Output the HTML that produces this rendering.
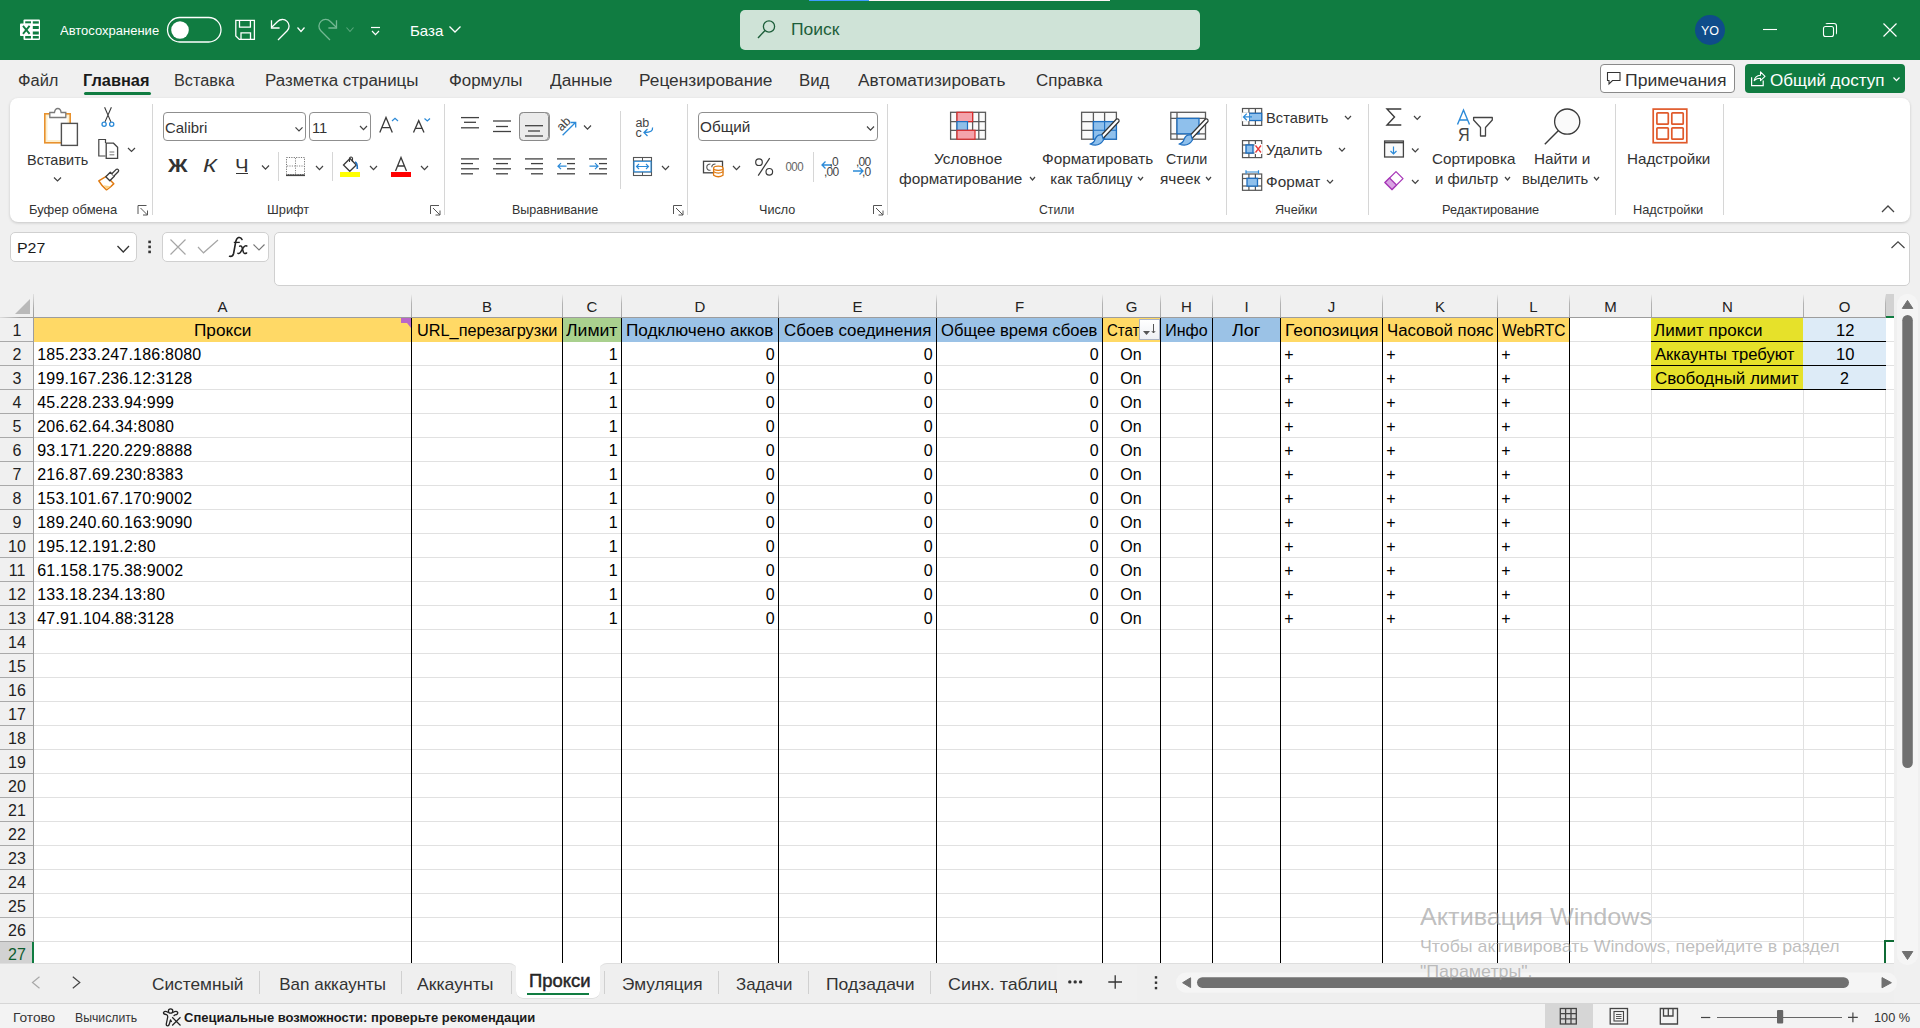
<!DOCTYPE html><html><head><meta charset="utf-8"><style>html,body{margin:0;padding:0;width:1920px;height:1028px;overflow:hidden;position:relative;background:#f0f0f0;font-family:"Liberation Sans",sans-serif}</style></head><body><div style="position:absolute;left:0px;top:0px;width:1920px;height:60px;background:#107c41"></div><div style="position:absolute;left:809px;top:0px;width:60px;height:1px;background:#3d9cff"></div><div style="position:absolute;left:869px;top:0px;width:241px;height:1px;background:#fdf4f4"></div><div style="position:absolute;left:740px;top:10px;width:460px;height:40px;background:#cfe3d7;border-radius:5px"></div><div style="position:absolute;left:791.21px;top:21.00px;white-space:pre;line-height:17px;font-family:&quot;Liberation Sans&quot;,sans-serif;font-size:16px;font-weight:400;color:#1d5e3a;transform:scaleX(1.0924);transform-origin:0 0;">Поиск</div><div style="position:absolute;left:60.41px;top:24.00px;white-space:pre;line-height:14px;font-family:&quot;Liberation Sans&quot;,sans-serif;font-size:12.5px;font-weight:400;color:#ffffff;transform:scaleX(1.0402);transform-origin:0 0;">Автосохранение</div><div style="position:absolute;left:410.32px;top:22.00px;white-space:pre;line-height:17px;font-family:&quot;Liberation Sans&quot;,sans-serif;font-size:15px;font-weight:400;color:#ffffff;transform:scaleX(1.0030);transform-origin:0 0;">База</div><div style="position:absolute;left:1695px;top:15px;width:30px;height:30px;background:#0f4c8a;border-radius:50%"></div><div style="position:absolute;left:1700.96px;top:24.00px;white-space:pre;line-height:14px;font-family:&quot;Liberation Sans&quot;,sans-serif;font-size:12px;font-weight:400;color:#ffffff;transform:scaleX(1.0425);transform-origin:0 0;">YO</div><div style="position:absolute;left:0px;top:60px;width:1920px;height:968px;background:#f0f0f0"></div><div style="position:absolute;left:18.26px;top:72.00px;white-space:pre;line-height:17px;font-family:&quot;Liberation Sans&quot;,sans-serif;font-size:16px;font-weight:400;color:#333333;transform:scaleX(1.0279);transform-origin:0 0;">Файл</div><div style="position:absolute;left:83.26px;top:72.00px;white-space:pre;line-height:17px;font-family:&quot;Liberation Sans&quot;,sans-serif;font-size:16px;font-weight:700;color:#1a1a1a;transform:scaleX(1.0209);transform-origin:0 0;">Главная</div><div style="position:absolute;left:174.27px;top:72.00px;white-space:pre;line-height:17px;font-family:&quot;Liberation Sans&quot;,sans-serif;font-size:16px;font-weight:400;color:#333333;transform:scaleX(1.0163);transform-origin:0 0;">Вставка</div><div style="position:absolute;left:265.24px;top:72.00px;white-space:pre;line-height:17px;font-family:&quot;Liberation Sans&quot;,sans-serif;font-size:16px;font-weight:400;color:#333333;transform:scaleX(1.0571);transform-origin:0 0;">Разметка страницы</div><div style="position:absolute;left:449.24px;top:72.00px;white-space:pre;line-height:17px;font-family:&quot;Liberation Sans&quot;,sans-serif;font-size:16px;font-weight:400;color:#333333;transform:scaleX(1.0548);transform-origin:0 0;">Формулы</div><div style="position:absolute;left:550.22px;top:72.00px;white-space:pre;line-height:17px;font-family:&quot;Liberation Sans&quot;,sans-serif;font-size:16px;font-weight:400;color:#333333;transform:scaleX(1.0800);transform-origin:0 0;">Данные</div><div style="position:absolute;left:639.22px;top:72.00px;white-space:pre;line-height:17px;font-family:&quot;Liberation Sans&quot;,sans-serif;font-size:16px;font-weight:400;color:#333333;transform:scaleX(1.0801);transform-origin:0 0;">Рецензирование</div><div style="position:absolute;left:799.24px;top:72.00px;white-space:pre;line-height:17px;font-family:&quot;Liberation Sans&quot;,sans-serif;font-size:16px;font-weight:400;color:#333333;transform:scaleX(1.0514);transform-origin:0 0;">Вид</div><div style="position:absolute;left:858.23px;top:72.00px;white-space:pre;line-height:17px;font-family:&quot;Liberation Sans&quot;,sans-serif;font-size:16px;font-weight:400;color:#333333;transform:scaleX(1.0740);transform-origin:0 0;">Автоматизировать</div><div style="position:absolute;left:1036.24px;top:72.00px;white-space:pre;line-height:17px;font-family:&quot;Liberation Sans&quot;,sans-serif;font-size:16px;font-weight:400;color:#333333;transform:scaleX(1.0585);transform-origin:0 0;">Справка</div><div style="position:absolute;left:84px;top:92px;width:67px;height:3px;background:#107c41;border-radius:2px"></div><div style="position:absolute;left:1600px;top:64px;width:133px;height:27px;background:#fff;border:1px solid #8a8a8a;border-radius:4px"></div><div style="position:absolute;left:1625.21px;top:72.00px;white-space:pre;line-height:17px;font-family:&quot;Liberation Sans&quot;,sans-serif;font-size:16px;font-weight:400;color:#333333;transform:scaleX(1.0981);transform-origin:0 0;">Примечания</div><div style="position:absolute;left:1745px;top:64px;width:160px;height:29px;background:#107c41;border-radius:4px"></div><div style="position:absolute;left:1770.23px;top:72.00px;white-space:pre;line-height:17px;font-family:&quot;Liberation Sans&quot;,sans-serif;font-size:16px;font-weight:400;color:#ffffff;transform:scaleX(1.0646);transform-origin:0 0;">Общий доступ</div><div style="position:absolute;left:10px;top:98px;width:1900px;height:124px;background:#fff;border-radius:8px;box-shadow:0 1px 3px rgba(0,0,0,0.18)"></div><div style="position:absolute;left:152px;top:104px;width:1px;height:111px;background:#d6d6d6"></div><div style="position:absolute;left:444px;top:104px;width:1px;height:111px;background:#d6d6d6"></div><div style="position:absolute;left:687px;top:104px;width:1px;height:111px;background:#d6d6d6"></div><div style="position:absolute;left:887px;top:104px;width:1px;height:111px;background:#d6d6d6"></div><div style="position:absolute;left:1226px;top:104px;width:1px;height:111px;background:#d6d6d6"></div><div style="position:absolute;left:1368px;top:104px;width:1px;height:111px;background:#d6d6d6"></div><div style="position:absolute;left:1615px;top:104px;width:1px;height:111px;background:#d6d6d6"></div><div style="position:absolute;left:1723px;top:104px;width:1px;height:111px;background:#d6d6d6"></div><div style="position:absolute;left:29.42px;top:202.00px;white-space:pre;line-height:15px;font-family:&quot;Liberation Sans&quot;,sans-serif;font-size:13.5px;font-weight:400;color:#333333;transform:scaleX(0.9616);transform-origin:0 0;">Буфер обмена</div><div style="position:absolute;left:267.42px;top:202.00px;white-space:pre;line-height:15px;font-family:&quot;Liberation Sans&quot;,sans-serif;font-size:13.5px;font-weight:400;color:#333333;transform:scaleX(0.9503);transform-origin:0 0;">Шрифт</div><div style="position:absolute;left:512.44px;top:202.00px;white-space:pre;line-height:15px;font-family:&quot;Liberation Sans&quot;,sans-serif;font-size:13.5px;font-weight:400;color:#333333;transform:scaleX(0.9277);transform-origin:0 0;">Выравнивание</div><div style="position:absolute;left:759.43px;top:202.00px;white-space:pre;line-height:15px;font-family:&quot;Liberation Sans&quot;,sans-serif;font-size:13.5px;font-weight:400;color:#333333;transform:scaleX(0.9327);transform-origin:0 0;">Число</div><div style="position:absolute;left:1039.45px;top:202.00px;white-space:pre;line-height:15px;font-family:&quot;Liberation Sans&quot;,sans-serif;font-size:13.5px;font-weight:400;color:#333333;transform:scaleX(0.9051);transform-origin:0 0;">Стили</div><div style="position:absolute;left:1275.43px;top:202.00px;white-space:pre;line-height:15px;font-family:&quot;Liberation Sans&quot;,sans-serif;font-size:13.5px;font-weight:400;color:#333333;transform:scaleX(0.9323);transform-origin:0 0;">Ячейки</div><div style="position:absolute;left:1442.43px;top:202.00px;white-space:pre;line-height:15px;font-family:&quot;Liberation Sans&quot;,sans-serif;font-size:13.5px;font-weight:400;color:#333333;transform:scaleX(0.9453);transform-origin:0 0;">Редактирование</div><div style="position:absolute;left:1633.42px;top:202.00px;white-space:pre;line-height:15px;font-family:&quot;Liberation Sans&quot;,sans-serif;font-size:13.5px;font-weight:400;color:#333333;transform:scaleX(0.9479);transform-origin:0 0;">Надстройки</div><div style="position:absolute;left:27.35px;top:151.00px;white-space:pre;line-height:17px;font-family:&quot;Liberation Sans&quot;,sans-serif;font-size:15px;font-weight:400;color:#333333;transform:scaleX(0.9647);transform-origin:0 0;">Вставить</div><div style="position:absolute;left:934.30px;top:150.00px;white-space:pre;line-height:17px;font-family:&quot;Liberation Sans&quot;,sans-serif;font-size:15px;font-weight:400;color:#333333;transform:scaleX(1.0319);transform-origin:0 0;">Условное</div><div style="position:absolute;left:899.31px;top:170.00px;white-space:pre;line-height:17px;font-family:&quot;Liberation Sans&quot;,sans-serif;font-size:15px;font-weight:400;color:#333333;transform:scaleX(1.0242);transform-origin:0 0;">форматирование</div><div style="position:absolute;left:1042.31px;top:150.00px;white-space:pre;line-height:17px;font-family:&quot;Liberation Sans&quot;,sans-serif;font-size:15px;font-weight:400;color:#333333;transform:scaleX(1.0229);transform-origin:0 0;">Форматировать</div><div style="position:absolute;left:1050.32px;top:170.00px;white-space:pre;line-height:17px;font-family:&quot;Liberation Sans&quot;,sans-serif;font-size:15px;font-weight:400;color:#333333;">как таблицу</div><div style="position:absolute;left:1166.35px;top:150.00px;white-space:pre;line-height:17px;font-family:&quot;Liberation Sans&quot;,sans-serif;font-size:15px;font-weight:400;color:#333333;transform:scaleX(0.9568);transform-origin:0 0;">Стили</div><div style="position:absolute;left:1160.30px;top:170.00px;white-space:pre;line-height:17px;font-family:&quot;Liberation Sans&quot;,sans-serif;font-size:15px;font-weight:400;color:#333333;transform:scaleX(1.0297);transform-origin:0 0;">ячеек</div><div style="position:absolute;left:1266.34px;top:109.00px;white-space:pre;line-height:17px;font-family:&quot;Liberation Sans&quot;,sans-serif;font-size:15px;font-weight:400;color:#333333;transform:scaleX(0.9804);transform-origin:0 0;">Вставить</div><div style="position:absolute;left:1266.34px;top:141.00px;white-space:pre;line-height:17px;font-family:&quot;Liberation Sans&quot;,sans-serif;font-size:15px;font-weight:400;color:#333333;transform:scaleX(0.9837);transform-origin:0 0;">Удалить</div><div style="position:absolute;left:1266.31px;top:173.00px;white-space:pre;line-height:17px;font-family:&quot;Liberation Sans&quot;,sans-serif;font-size:15px;font-weight:400;color:#333333;transform:scaleX(1.0198);transform-origin:0 0;">Формат</div><div style="position:absolute;left:1432.32px;top:150.00px;white-space:pre;line-height:17px;font-family:&quot;Liberation Sans&quot;,sans-serif;font-size:15px;font-weight:400;color:#333333;transform:scaleX(1.0124);transform-origin:0 0;">Сортировка</div><div style="position:absolute;left:1435.33px;top:170.00px;white-space:pre;line-height:17px;font-family:&quot;Liberation Sans&quot;,sans-serif;font-size:15px;font-weight:400;color:#333333;transform:scaleX(0.9918);transform-origin:0 0;">и фильтр</div><div style="position:absolute;left:1534.31px;top:150.00px;white-space:pre;line-height:17px;font-family:&quot;Liberation Sans&quot;,sans-serif;font-size:15px;font-weight:400;color:#333333;transform:scaleX(1.0179);transform-origin:0 0;">Найти и</div><div style="position:absolute;left:1522.33px;top:170.00px;white-space:pre;line-height:17px;font-family:&quot;Liberation Sans&quot;,sans-serif;font-size:15px;font-weight:400;color:#333333;transform:scaleX(0.9878);transform-origin:0 0;">выделить</div><div style="position:absolute;left:1627.32px;top:150.00px;white-space:pre;line-height:17px;font-family:&quot;Liberation Sans&quot;,sans-serif;font-size:15px;font-weight:400;color:#333333;transform:scaleX(1.0126);transform-origin:0 0;">Надстройки</div><div style="position:absolute;left:163px;top:112px;width:141px;height:27px;background:#fff;border:1px solid #8f8f8f;border-radius:4px"></div><div style="position:absolute;left:309px;top:112px;width:60px;height:27px;background:#fff;border:1px solid #8f8f8f;border-radius:4px"></div><div style="position:absolute;left:698px;top:112px;width:178px;height:27px;background:#fff;border:1px solid #8f8f8f;border-radius:4px"></div><div style="position:absolute;left:519px;top:112px;width:29px;height:27px;background:#ebebeb;border:1px solid #8f8f8f;border-radius:4px"></div><div style="position:absolute;left:165.33px;top:119.00px;white-space:pre;line-height:17px;font-family:&quot;Liberation Sans&quot;,sans-serif;font-size:15px;font-weight:400;color:#333333;transform:scaleX(0.9961);transform-origin:0 0;">Calibri</div><div style="position:absolute;left:312.33px;top:119.00px;white-space:pre;line-height:17px;font-family:&quot;Liberation Sans&quot;,sans-serif;font-size:15px;font-weight:400;color:#333333;transform:scaleX(0.9854);transform-origin:0 0;">11</div><div style="position:absolute;left:700.31px;top:118.00px;white-space:pre;line-height:17px;font-family:&quot;Liberation Sans&quot;,sans-serif;font-size:15px;font-weight:400;color:#333333;transform:scaleX(1.0201);transform-origin:0 0;">Общий</div><div style="position:absolute;left:168.03px;top:156.00px;white-space:pre;line-height:20px;font-family:&quot;Liberation Sans&quot;,sans-serif;font-size:17.5px;font-weight:700;color:#333;transform:scaleX(1.2367);transform-origin:0 0;">Ж</div><div style="position:absolute;left:202.95px;top:156.00px;white-space:pre;line-height:20px;font-family:&quot;Liberation Sans&quot;,sans-serif;font-size:17.5px;font-weight:400;color:#333;font-style:italic;transform:scaleX(1.3305);transform-origin:0 0;">К</div><div style="position:absolute;left:235.08px;top:156.00px;white-space:pre;line-height:20px;font-family:&quot;Liberation Sans&quot;,sans-serif;font-size:17.5px;font-weight:400;color:#333;transform:scaleX(1.1631);transform-origin:0 0;">Ч</div><div style="position:absolute;left:236px;top:173px;width:12px;height:1.3px;background:#333"></div><div style="position:absolute;left:10px;top:232px;width:125px;height:28px;background:#fff;border:1px solid #d0d0d0;border-radius:5px"></div><div style="position:absolute;left:17.28px;top:239.00px;white-space:pre;line-height:17px;font-family:&quot;Liberation Sans&quot;,sans-serif;font-size:15px;font-weight:400;color:#1a1a1a;transform:scaleX(1.0617);transform-origin:0 0;">P27</div><div style="position:absolute;left:162px;top:232px;width:105px;height:28px;background:#fff;border:1px solid #d0d0d0;border-radius:5px"></div><div style="position:absolute;left:274px;top:232px;width:1634px;height:52px;background:#fff;border:1px solid #d0d0d0;border-radius:5px"></div><div style="position:absolute;left:34px;top:318px;width:1860px;height:645px;background:#fff"></div><div style="position:absolute;left:34px;top:341px;width:1860px;height:1px;background:#e1e1e1"></div><div style="position:absolute;left:34px;top:365px;width:1860px;height:1px;background:#e1e1e1"></div><div style="position:absolute;left:34px;top:389px;width:1860px;height:1px;background:#e1e1e1"></div><div style="position:absolute;left:34px;top:413px;width:1860px;height:1px;background:#e1e1e1"></div><div style="position:absolute;left:34px;top:437px;width:1860px;height:1px;background:#e1e1e1"></div><div style="position:absolute;left:34px;top:461px;width:1860px;height:1px;background:#e1e1e1"></div><div style="position:absolute;left:34px;top:485px;width:1860px;height:1px;background:#e1e1e1"></div><div style="position:absolute;left:34px;top:509px;width:1860px;height:1px;background:#e1e1e1"></div><div style="position:absolute;left:34px;top:533px;width:1860px;height:1px;background:#e1e1e1"></div><div style="position:absolute;left:34px;top:557px;width:1860px;height:1px;background:#e1e1e1"></div><div style="position:absolute;left:34px;top:581px;width:1860px;height:1px;background:#e1e1e1"></div><div style="position:absolute;left:34px;top:605px;width:1860px;height:1px;background:#e1e1e1"></div><div style="position:absolute;left:34px;top:629px;width:1860px;height:1px;background:#e1e1e1"></div><div style="position:absolute;left:34px;top:653px;width:1860px;height:1px;background:#e1e1e1"></div><div style="position:absolute;left:34px;top:677px;width:1860px;height:1px;background:#e1e1e1"></div><div style="position:absolute;left:34px;top:701px;width:1860px;height:1px;background:#e1e1e1"></div><div style="position:absolute;left:34px;top:725px;width:1860px;height:1px;background:#e1e1e1"></div><div style="position:absolute;left:34px;top:749px;width:1860px;height:1px;background:#e1e1e1"></div><div style="position:absolute;left:34px;top:773px;width:1860px;height:1px;background:#e1e1e1"></div><div style="position:absolute;left:34px;top:797px;width:1860px;height:1px;background:#e1e1e1"></div><div style="position:absolute;left:34px;top:821px;width:1860px;height:1px;background:#e1e1e1"></div><div style="position:absolute;left:34px;top:845px;width:1860px;height:1px;background:#e1e1e1"></div><div style="position:absolute;left:34px;top:869px;width:1860px;height:1px;background:#e1e1e1"></div><div style="position:absolute;left:34px;top:893px;width:1860px;height:1px;background:#e1e1e1"></div><div style="position:absolute;left:34px;top:917px;width:1860px;height:1px;background:#e1e1e1"></div><div style="position:absolute;left:34px;top:941px;width:1860px;height:1px;background:#e1e1e1"></div><div style="position:absolute;left:411px;top:318px;width:1px;height:645px;background:#e1e1e1"></div><div style="position:absolute;left:562px;top:318px;width:1px;height:645px;background:#e1e1e1"></div><div style="position:absolute;left:621px;top:318px;width:1px;height:645px;background:#e1e1e1"></div><div style="position:absolute;left:778px;top:318px;width:1px;height:645px;background:#e1e1e1"></div><div style="position:absolute;left:936px;top:318px;width:1px;height:645px;background:#e1e1e1"></div><div style="position:absolute;left:1102px;top:318px;width:1px;height:645px;background:#e1e1e1"></div><div style="position:absolute;left:1160px;top:318px;width:1px;height:645px;background:#e1e1e1"></div><div style="position:absolute;left:1212px;top:318px;width:1px;height:645px;background:#e1e1e1"></div><div style="position:absolute;left:1280px;top:318px;width:1px;height:645px;background:#e1e1e1"></div><div style="position:absolute;left:1382px;top:318px;width:1px;height:645px;background:#e1e1e1"></div><div style="position:absolute;left:1497px;top:318px;width:1px;height:645px;background:#e1e1e1"></div><div style="position:absolute;left:1569px;top:318px;width:1px;height:645px;background:#e1e1e1"></div><div style="position:absolute;left:1651px;top:318px;width:1px;height:645px;background:#e1e1e1"></div><div style="position:absolute;left:1803px;top:318px;width:1px;height:645px;background:#e1e1e1"></div><div style="position:absolute;left:1885px;top:318px;width:1px;height:645px;background:#e1e1e1"></div><div style="position:absolute;left:34px;top:318px;width:378px;height:24px;background:#ffd966"></div><div style="position:absolute;left:412px;top:318px;width:151px;height:24px;background:#ffd966"></div><div style="position:absolute;left:563px;top:318px;width:59px;height:24px;background:#a9d08e"></div><div style="position:absolute;left:622px;top:318px;width:157px;height:24px;background:#9bc2e6"></div><div style="position:absolute;left:779px;top:318px;width:158px;height:24px;background:#9bc2e6"></div><div style="position:absolute;left:937px;top:318px;width:166px;height:24px;background:#9bc2e6"></div><div style="position:absolute;left:1103px;top:318px;width:58px;height:24px;background:#ffd966"></div><div style="position:absolute;left:1161px;top:318px;width:52px;height:24px;background:#9bc2e6"></div><div style="position:absolute;left:1213px;top:318px;width:68px;height:24px;background:#9bc2e6"></div><div style="position:absolute;left:1281px;top:318px;width:102px;height:24px;background:#ffd966"></div><div style="position:absolute;left:1383px;top:318px;width:115px;height:24px;background:#ffd966"></div><div style="position:absolute;left:1498px;top:318px;width:72px;height:24px;background:#ffd966"></div><div style="position:absolute;left:1651px;top:318px;width:152px;height:24px;background:#e6e12a"></div><div style="position:absolute;left:1803px;top:318px;width:83px;height:24px;background:#ddebf7"></div><div style="position:absolute;left:1651px;top:341px;width:235px;height:1px;background:#000"></div><div style="position:absolute;left:1651px;top:342px;width:152px;height:24px;background:#e6e12a"></div><div style="position:absolute;left:1803px;top:342px;width:83px;height:24px;background:#ddebf7"></div><div style="position:absolute;left:1651px;top:365px;width:235px;height:1px;background:#000"></div><div style="position:absolute;left:1651px;top:366px;width:152px;height:24px;background:#e6e12a"></div><div style="position:absolute;left:1803px;top:366px;width:83px;height:24px;background:#ddebf7"></div><div style="position:absolute;left:1651px;top:389px;width:235px;height:1px;background:#000"></div><div style="position:absolute;left:411px;top:318px;width:1px;height:645px;background:#000"></div><div style="position:absolute;left:562px;top:318px;width:1px;height:645px;background:#000"></div><div style="position:absolute;left:621px;top:318px;width:1px;height:645px;background:#000"></div><div style="position:absolute;left:778px;top:318px;width:1px;height:645px;background:#000"></div><div style="position:absolute;left:936px;top:318px;width:1px;height:645px;background:#000"></div><div style="position:absolute;left:1102px;top:318px;width:1px;height:645px;background:#000"></div><div style="position:absolute;left:1160px;top:318px;width:1px;height:645px;background:#000"></div><div style="position:absolute;left:1212px;top:318px;width:1px;height:645px;background:#000"></div><div style="position:absolute;left:1280px;top:318px;width:1px;height:645px;background:#000"></div><div style="position:absolute;left:1382px;top:318px;width:1px;height:645px;background:#000"></div><div style="position:absolute;left:1497px;top:318px;width:1px;height:645px;background:#000"></div><div style="position:absolute;left:1569px;top:318px;width:1px;height:645px;background:#000"></div><div style="position:absolute;left:0px;top:294px;width:1894px;height:23px;background:#f0f0f0"></div><div style="position:absolute;left:34px;top:317px;width:1860px;height:1px;background:#9d9d9d"></div><div style="position:absolute;left:0px;top:317px;width:34px;height:1px;background:linear-gradient(90deg,#dcdcdc,#a0a0a0 60%,#9d9d9d)"></div><div style="position:absolute;left:411px;top:294px;width:1px;height:23px;background:linear-gradient(#f0f0f0,#b4b4b4 40%,#a8a8a8)"></div><div style="position:absolute;left:562px;top:294px;width:1px;height:23px;background:linear-gradient(#f0f0f0,#b4b4b4 40%,#a8a8a8)"></div><div style="position:absolute;left:621px;top:294px;width:1px;height:23px;background:linear-gradient(#f0f0f0,#b4b4b4 40%,#a8a8a8)"></div><div style="position:absolute;left:778px;top:294px;width:1px;height:23px;background:linear-gradient(#f0f0f0,#b4b4b4 40%,#a8a8a8)"></div><div style="position:absolute;left:936px;top:294px;width:1px;height:23px;background:linear-gradient(#f0f0f0,#b4b4b4 40%,#a8a8a8)"></div><div style="position:absolute;left:1102px;top:294px;width:1px;height:23px;background:linear-gradient(#f0f0f0,#b4b4b4 40%,#a8a8a8)"></div><div style="position:absolute;left:1160px;top:294px;width:1px;height:23px;background:linear-gradient(#f0f0f0,#b4b4b4 40%,#a8a8a8)"></div><div style="position:absolute;left:1212px;top:294px;width:1px;height:23px;background:linear-gradient(#f0f0f0,#b4b4b4 40%,#a8a8a8)"></div><div style="position:absolute;left:1280px;top:294px;width:1px;height:23px;background:linear-gradient(#f0f0f0,#b4b4b4 40%,#a8a8a8)"></div><div style="position:absolute;left:1382px;top:294px;width:1px;height:23px;background:linear-gradient(#f0f0f0,#b4b4b4 40%,#a8a8a8)"></div><div style="position:absolute;left:1497px;top:294px;width:1px;height:23px;background:linear-gradient(#f0f0f0,#b4b4b4 40%,#a8a8a8)"></div><div style="position:absolute;left:1569px;top:294px;width:1px;height:23px;background:linear-gradient(#f0f0f0,#b4b4b4 40%,#a8a8a8)"></div><div style="position:absolute;left:1651px;top:294px;width:1px;height:23px;background:linear-gradient(#f0f0f0,#b4b4b4 40%,#a8a8a8)"></div><div style="position:absolute;left:1803px;top:294px;width:1px;height:23px;background:linear-gradient(#f0f0f0,#b4b4b4 40%,#a8a8a8)"></div><div style="position:absolute;left:1885px;top:294px;width:1px;height:23px;background:linear-gradient(#f0f0f0,#b4b4b4 40%,#a8a8a8)"></div><div style="position:absolute;left:1886px;top:294px;width:8px;height:23px;background:#d2d2d2"></div><div style="position:absolute;left:1886px;top:316px;width:8px;height:2px;background:#107c41"></div><div style="position:absolute;left:217.49px;top:298.00px;white-space:pre;line-height:17px;font-family:&quot;Liberation Sans&quot;,sans-serif;font-size:15px;font-weight:400;color:#222;">A</div><div style="position:absolute;left:481.99px;top:298.00px;white-space:pre;line-height:17px;font-family:&quot;Liberation Sans&quot;,sans-serif;font-size:15px;font-weight:400;color:#222;">B</div><div style="position:absolute;left:586.58px;top:298.00px;white-space:pre;line-height:17px;font-family:&quot;Liberation Sans&quot;,sans-serif;font-size:15px;font-weight:400;color:#222;">C</div><div style="position:absolute;left:694.58px;top:298.00px;white-space:pre;line-height:17px;font-family:&quot;Liberation Sans&quot;,sans-serif;font-size:15px;font-weight:400;color:#222;">D</div><div style="position:absolute;left:852.49px;top:298.00px;white-space:pre;line-height:17px;font-family:&quot;Liberation Sans&quot;,sans-serif;font-size:15px;font-weight:400;color:#222;">E</div><div style="position:absolute;left:1014.91px;top:298.00px;white-space:pre;line-height:17px;font-family:&quot;Liberation Sans&quot;,sans-serif;font-size:15px;font-weight:400;color:#222;">F</div><div style="position:absolute;left:1125.66px;top:298.00px;white-space:pre;line-height:17px;font-family:&quot;Liberation Sans&quot;,sans-serif;font-size:15px;font-weight:400;color:#222;">G</div><div style="position:absolute;left:1181.08px;top:298.00px;white-space:pre;line-height:17px;font-family:&quot;Liberation Sans&quot;,sans-serif;font-size:15px;font-weight:400;color:#222;">H</div><div style="position:absolute;left:1244.41px;top:298.00px;white-space:pre;line-height:17px;font-family:&quot;Liberation Sans&quot;,sans-serif;font-size:15px;font-weight:400;color:#222;">I</div><div style="position:absolute;left:1327.75px;top:298.00px;white-space:pre;line-height:17px;font-family:&quot;Liberation Sans&quot;,sans-serif;font-size:15px;font-weight:400;color:#222;">J</div><div style="position:absolute;left:1434.99px;top:298.00px;white-space:pre;line-height:17px;font-family:&quot;Liberation Sans&quot;,sans-serif;font-size:15px;font-weight:400;color:#222;">K</div><div style="position:absolute;left:1529.33px;top:298.00px;white-space:pre;line-height:17px;font-family:&quot;Liberation Sans&quot;,sans-serif;font-size:15px;font-weight:400;color:#222;">L</div><div style="position:absolute;left:1604.25px;top:298.00px;white-space:pre;line-height:17px;font-family:&quot;Liberation Sans&quot;,sans-serif;font-size:15px;font-weight:400;color:#222;">M</div><div style="position:absolute;left:1722.08px;top:298.00px;white-space:pre;line-height:17px;font-family:&quot;Liberation Sans&quot;,sans-serif;font-size:15px;font-weight:400;color:#222;">N</div><div style="position:absolute;left:1838.66px;top:298.00px;white-space:pre;line-height:17px;font-family:&quot;Liberation Sans&quot;,sans-serif;font-size:15px;font-weight:400;color:#222;">O</div><svg style="position:absolute;left:4px;top:296px" width="28" height="20"><polygon points="26,3 26,18 11,18" fill="#b9b9b9"/></svg><div style="position:absolute;left:0px;top:318px;width:33px;height:645px;background:#f0f0f0"></div><div style="position:absolute;left:33px;top:318px;width:1px;height:645px;background:#9d9d9d"></div><div style="position:absolute;left:33px;top:294px;width:1px;height:24px;background:linear-gradient(#e0e0e0,#a8a8a8 60%,#9d9d9d)"></div><div style="position:absolute;left:0px;top:341px;width:33px;height:1px;background:#a9a9a9"></div><div style="position:absolute;left:12.55px;top:322.00px;white-space:pre;line-height:17px;font-family:&quot;Liberation Sans&quot;,sans-serif;font-size:16px;font-weight:400;color:#222;">1</div><div style="position:absolute;left:0px;top:365px;width:33px;height:1px;background:#a9a9a9"></div><div style="position:absolute;left:12.55px;top:346.00px;white-space:pre;line-height:17px;font-family:&quot;Liberation Sans&quot;,sans-serif;font-size:16px;font-weight:400;color:#222;">2</div><div style="position:absolute;left:0px;top:389px;width:33px;height:1px;background:#a9a9a9"></div><div style="position:absolute;left:12.55px;top:370.00px;white-space:pre;line-height:17px;font-family:&quot;Liberation Sans&quot;,sans-serif;font-size:16px;font-weight:400;color:#222;">3</div><div style="position:absolute;left:0px;top:413px;width:33px;height:1px;background:#a9a9a9"></div><div style="position:absolute;left:12.55px;top:394.00px;white-space:pre;line-height:17px;font-family:&quot;Liberation Sans&quot;,sans-serif;font-size:16px;font-weight:400;color:#222;">4</div><div style="position:absolute;left:0px;top:437px;width:33px;height:1px;background:#a9a9a9"></div><div style="position:absolute;left:12.55px;top:418.00px;white-space:pre;line-height:17px;font-family:&quot;Liberation Sans&quot;,sans-serif;font-size:16px;font-weight:400;color:#222;">5</div><div style="position:absolute;left:0px;top:461px;width:33px;height:1px;background:#a9a9a9"></div><div style="position:absolute;left:12.55px;top:442.00px;white-space:pre;line-height:17px;font-family:&quot;Liberation Sans&quot;,sans-serif;font-size:16px;font-weight:400;color:#222;">6</div><div style="position:absolute;left:0px;top:485px;width:33px;height:1px;background:#a9a9a9"></div><div style="position:absolute;left:12.55px;top:466.00px;white-space:pre;line-height:17px;font-family:&quot;Liberation Sans&quot;,sans-serif;font-size:16px;font-weight:400;color:#222;">7</div><div style="position:absolute;left:0px;top:509px;width:33px;height:1px;background:#a9a9a9"></div><div style="position:absolute;left:12.55px;top:490.00px;white-space:pre;line-height:17px;font-family:&quot;Liberation Sans&quot;,sans-serif;font-size:16px;font-weight:400;color:#222;">8</div><div style="position:absolute;left:0px;top:533px;width:33px;height:1px;background:#a9a9a9"></div><div style="position:absolute;left:12.55px;top:514.00px;white-space:pre;line-height:17px;font-family:&quot;Liberation Sans&quot;,sans-serif;font-size:16px;font-weight:400;color:#222;">9</div><div style="position:absolute;left:0px;top:557px;width:33px;height:1px;background:#a9a9a9"></div><div style="position:absolute;left:8.10px;top:538.00px;white-space:pre;line-height:17px;font-family:&quot;Liberation Sans&quot;,sans-serif;font-size:16px;font-weight:400;color:#222;">10</div><div style="position:absolute;left:0px;top:581px;width:33px;height:1px;background:#a9a9a9"></div><div style="position:absolute;left:8.70px;top:562.00px;white-space:pre;line-height:17px;font-family:&quot;Liberation Sans&quot;,sans-serif;font-size:16px;font-weight:400;color:#222;">11</div><div style="position:absolute;left:0px;top:605px;width:33px;height:1px;background:#a9a9a9"></div><div style="position:absolute;left:8.10px;top:586.00px;white-space:pre;line-height:17px;font-family:&quot;Liberation Sans&quot;,sans-serif;font-size:16px;font-weight:400;color:#222;">12</div><div style="position:absolute;left:0px;top:629px;width:33px;height:1px;background:#a9a9a9"></div><div style="position:absolute;left:8.10px;top:610.00px;white-space:pre;line-height:17px;font-family:&quot;Liberation Sans&quot;,sans-serif;font-size:16px;font-weight:400;color:#222;">13</div><div style="position:absolute;left:0px;top:653px;width:33px;height:1px;background:#a9a9a9"></div><div style="position:absolute;left:8.10px;top:634.00px;white-space:pre;line-height:17px;font-family:&quot;Liberation Sans&quot;,sans-serif;font-size:16px;font-weight:400;color:#222;">14</div><div style="position:absolute;left:0px;top:677px;width:33px;height:1px;background:#a9a9a9"></div><div style="position:absolute;left:8.10px;top:658.00px;white-space:pre;line-height:17px;font-family:&quot;Liberation Sans&quot;,sans-serif;font-size:16px;font-weight:400;color:#222;">15</div><div style="position:absolute;left:0px;top:701px;width:33px;height:1px;background:#a9a9a9"></div><div style="position:absolute;left:8.10px;top:682.00px;white-space:pre;line-height:17px;font-family:&quot;Liberation Sans&quot;,sans-serif;font-size:16px;font-weight:400;color:#222;">16</div><div style="position:absolute;left:0px;top:725px;width:33px;height:1px;background:#a9a9a9"></div><div style="position:absolute;left:8.10px;top:706.00px;white-space:pre;line-height:17px;font-family:&quot;Liberation Sans&quot;,sans-serif;font-size:16px;font-weight:400;color:#222;">17</div><div style="position:absolute;left:0px;top:749px;width:33px;height:1px;background:#a9a9a9"></div><div style="position:absolute;left:8.10px;top:730.00px;white-space:pre;line-height:17px;font-family:&quot;Liberation Sans&quot;,sans-serif;font-size:16px;font-weight:400;color:#222;">18</div><div style="position:absolute;left:0px;top:773px;width:33px;height:1px;background:#a9a9a9"></div><div style="position:absolute;left:8.10px;top:754.00px;white-space:pre;line-height:17px;font-family:&quot;Liberation Sans&quot;,sans-serif;font-size:16px;font-weight:400;color:#222;">19</div><div style="position:absolute;left:0px;top:797px;width:33px;height:1px;background:#a9a9a9"></div><div style="position:absolute;left:8.10px;top:778.00px;white-space:pre;line-height:17px;font-family:&quot;Liberation Sans&quot;,sans-serif;font-size:16px;font-weight:400;color:#222;">20</div><div style="position:absolute;left:0px;top:821px;width:33px;height:1px;background:#a9a9a9"></div><div style="position:absolute;left:8.10px;top:802.00px;white-space:pre;line-height:17px;font-family:&quot;Liberation Sans&quot;,sans-serif;font-size:16px;font-weight:400;color:#222;">21</div><div style="position:absolute;left:0px;top:845px;width:33px;height:1px;background:#a9a9a9"></div><div style="position:absolute;left:8.10px;top:826.00px;white-space:pre;line-height:17px;font-family:&quot;Liberation Sans&quot;,sans-serif;font-size:16px;font-weight:400;color:#222;">22</div><div style="position:absolute;left:0px;top:869px;width:33px;height:1px;background:#a9a9a9"></div><div style="position:absolute;left:8.10px;top:850.00px;white-space:pre;line-height:17px;font-family:&quot;Liberation Sans&quot;,sans-serif;font-size:16px;font-weight:400;color:#222;">23</div><div style="position:absolute;left:0px;top:893px;width:33px;height:1px;background:#a9a9a9"></div><div style="position:absolute;left:8.10px;top:874.00px;white-space:pre;line-height:17px;font-family:&quot;Liberation Sans&quot;,sans-serif;font-size:16px;font-weight:400;color:#222;">24</div><div style="position:absolute;left:0px;top:917px;width:33px;height:1px;background:#a9a9a9"></div><div style="position:absolute;left:8.10px;top:898.00px;white-space:pre;line-height:17px;font-family:&quot;Liberation Sans&quot;,sans-serif;font-size:16px;font-weight:400;color:#222;">25</div><div style="position:absolute;left:0px;top:941px;width:33px;height:1px;background:#a9a9a9"></div><div style="position:absolute;left:8.10px;top:922.00px;white-space:pre;line-height:17px;font-family:&quot;Liberation Sans&quot;,sans-serif;font-size:16px;font-weight:400;color:#222;">26</div><div style="position:absolute;left:0px;top:942px;width:33px;height:21px;background:#d2d2d2"></div><div style="position:absolute;left:32px;top:942px;width:2px;height:21px;background:#107c41"></div><div style="position:absolute;left:8.10px;top:946.00px;white-space:pre;line-height:17px;font-family:&quot;Liberation Sans&quot;,sans-serif;font-size:16px;font-weight:400;color:#0e5c2f;">27</div><div style="position:absolute;left:1884px;top:940px;width:10px;height:2px;background:#0f6b35"></div><div style="position:absolute;left:1884px;top:940px;width:2px;height:23px;background:#0f6b35"></div><div style="position:absolute;left:193.78px;top:322.00px;white-space:pre;line-height:17px;font-family:&quot;Liberation Sans&quot;,sans-serif;font-size:16px;font-weight:400;color:#000;transform:scaleX(1.0752);transform-origin:0 0;">Прокси</div><div style="position:absolute;left:416.78px;top:322.00px;white-space:pre;line-height:17px;font-family:&quot;Liberation Sans&quot;,sans-serif;font-size:16px;font-weight:400;color:#000;transform:scaleX(1.0178);transform-origin:0 0;">URL_перезагрузки</div><div style="position:absolute;left:566.28px;top:322.00px;white-space:pre;line-height:17px;font-family:&quot;Liberation Sans&quot;,sans-serif;font-size:16px;font-weight:400;color:#000;transform:scaleX(1.1014);transform-origin:0 0;">Лимит</div><div style="position:absolute;left:626.28px;top:322.00px;white-space:pre;line-height:17px;font-family:&quot;Liberation Sans&quot;,sans-serif;font-size:16px;font-weight:400;color:#000;transform:scaleX(1.0728);transform-origin:0 0;">Подключено акков</div><div style="position:absolute;left:783.78px;top:322.00px;white-space:pre;line-height:17px;font-family:&quot;Liberation Sans&quot;,sans-serif;font-size:16px;font-weight:400;color:#000;transform:scaleX(1.0567);transform-origin:0 0;">Сбоев соединения</div><div style="position:absolute;left:941.28px;top:322.00px;white-space:pre;line-height:17px;font-family:&quot;Liberation Sans&quot;,sans-serif;font-size:16px;font-weight:400;color:#000;transform:scaleX(1.0381);transform-origin:0 0;">Общее время сбоев</div><div style="position:absolute;left:1165.28px;top:322.00px;white-space:pre;line-height:17px;font-family:&quot;Liberation Sans&quot;,sans-serif;font-size:16px;font-weight:400;color:#000;">Инфо</div><div style="position:absolute;left:1232.28px;top:322.00px;white-space:pre;line-height:17px;font-family:&quot;Liberation Sans&quot;,sans-serif;font-size:16px;font-weight:400;color:#000;transform:scaleX(1.1270);transform-origin:0 0;">Лог</div><div style="position:absolute;left:1284.78px;top:322.00px;white-space:pre;line-height:17px;font-family:&quot;Liberation Sans&quot;,sans-serif;font-size:16px;font-weight:400;color:#000;transform:scaleX(1.0889);transform-origin:0 0;">Геопозиция</div><div style="position:absolute;left:1386.78px;top:322.00px;white-space:pre;line-height:17px;font-family:&quot;Liberation Sans&quot;,sans-serif;font-size:16px;font-weight:400;color:#000;transform:scaleX(1.0490);transform-origin:0 0;">Часовой пояс</div><div style="position:absolute;left:1501.78px;top:322.00px;white-space:pre;line-height:17px;font-family:&quot;Liberation Sans&quot;,sans-serif;font-size:16px;font-weight:400;color:#000;transform:scaleX(0.9730);transform-origin:0 0;">WebRTC</div><div style="position:absolute;left:1107.32px;top:322.00px;white-space:pre;line-height:17px;font-family:&quot;Liberation Sans&quot;,sans-serif;font-size:16px;font-weight:400;color:#000;transform:scaleX(0.9382);transform-origin:0 0;">Стат</div><div style="position:absolute;left:1139px;top:319px;width:21px;height:21px;background:linear-gradient(#ffffff,#eef0f4);border:1px solid #aab3c5;box-sizing:border-box"></div><svg style="position:absolute;left:1139px;top:319px" width="21" height="21"><polygon points="4,12 11,12 7.5,16" fill="#555"/><path d="M14.5 5 V14 M12.8 12 L14.5 14 L16.2 12" stroke="#555" stroke-width="1" fill="none"/></svg><svg style="position:absolute;left:400px;top:318px" width="11" height="11"><polygon points="1,0 11,0 11,10 7,5 1,5" fill="#b966c8"/></svg><div style="position:absolute;left:1654.23px;top:322.00px;white-space:pre;line-height:17px;font-family:&quot;Liberation Sans&quot;,sans-serif;font-size:16px;font-weight:400;color:#000;transform:scaleX(1.0659);transform-origin:0 0;">Лимит прокси</div><div style="position:absolute;left:1655.25px;top:346.00px;white-space:pre;line-height:17px;font-family:&quot;Liberation Sans&quot;,sans-serif;font-size:16px;font-weight:400;color:#000;transform:scaleX(1.0360);transform-origin:0 0;">Аккаунты требуют</div><div style="position:absolute;left:1655.24px;top:370.00px;white-space:pre;line-height:17px;font-family:&quot;Liberation Sans&quot;,sans-serif;font-size:16px;font-weight:400;color:#000;transform:scaleX(1.0619);transform-origin:0 0;">Свободный лимит</div><div style="position:absolute;left:1835.78px;top:322.00px;white-space:pre;line-height:17px;font-family:&quot;Liberation Sans&quot;,sans-serif;font-size:16px;font-weight:400;color:#000;transform:scaleX(1.0361);transform-origin:0 0;">12</div><div style="position:absolute;left:1835.78px;top:346.00px;white-space:pre;line-height:17px;font-family:&quot;Liberation Sans&quot;,sans-serif;font-size:16px;font-weight:400;color:#000;transform:scaleX(1.0361);transform-origin:0 0;">10</div><div style="position:absolute;left:1840.05px;top:370.00px;white-space:pre;line-height:17px;font-family:&quot;Liberation Sans&quot;,sans-serif;font-size:16px;font-weight:400;color:#000;">2</div><div style="position:absolute;left:37.28px;top:346.00px;white-space:pre;line-height:17px;font-family:&quot;Liberation Sans&quot;,sans-serif;font-size:16px;font-weight:400;color:#000;letter-spacing:0.2px">185.233.247.186:8080</div><div style="position:absolute;left:608.81px;top:346.00px;white-space:pre;line-height:17px;font-family:&quot;Liberation Sans&quot;,sans-serif;font-size:16px;font-weight:400;color:#000;">1</div><div style="position:absolute;left:765.81px;top:346.00px;white-space:pre;line-height:17px;font-family:&quot;Liberation Sans&quot;,sans-serif;font-size:16px;font-weight:400;color:#000;">0</div><div style="position:absolute;left:923.81px;top:346.00px;white-space:pre;line-height:17px;font-family:&quot;Liberation Sans&quot;,sans-serif;font-size:16px;font-weight:400;color:#000;">0</div><div style="position:absolute;left:1089.81px;top:346.00px;white-space:pre;line-height:17px;font-family:&quot;Liberation Sans&quot;,sans-serif;font-size:16px;font-weight:400;color:#000;">0</div><div style="position:absolute;left:1120.33px;top:346.00px;white-space:pre;line-height:17px;font-family:&quot;Liberation Sans&quot;,sans-serif;font-size:16px;font-weight:400;color:#000;">On</div><div style="position:absolute;left:1284.28px;top:346.00px;white-space:pre;line-height:17px;font-family:&quot;Liberation Sans&quot;,sans-serif;font-size:16px;font-weight:400;color:#000;">+</div><div style="position:absolute;left:1386.28px;top:346.00px;white-space:pre;line-height:17px;font-family:&quot;Liberation Sans&quot;,sans-serif;font-size:16px;font-weight:400;color:#000;">+</div><div style="position:absolute;left:1501.28px;top:346.00px;white-space:pre;line-height:17px;font-family:&quot;Liberation Sans&quot;,sans-serif;font-size:16px;font-weight:400;color:#000;">+</div><div style="position:absolute;left:37.28px;top:370.00px;white-space:pre;line-height:17px;font-family:&quot;Liberation Sans&quot;,sans-serif;font-size:16px;font-weight:400;color:#000;letter-spacing:0.2px">199.167.236.12:3128</div><div style="position:absolute;left:608.81px;top:370.00px;white-space:pre;line-height:17px;font-family:&quot;Liberation Sans&quot;,sans-serif;font-size:16px;font-weight:400;color:#000;">1</div><div style="position:absolute;left:765.81px;top:370.00px;white-space:pre;line-height:17px;font-family:&quot;Liberation Sans&quot;,sans-serif;font-size:16px;font-weight:400;color:#000;">0</div><div style="position:absolute;left:923.81px;top:370.00px;white-space:pre;line-height:17px;font-family:&quot;Liberation Sans&quot;,sans-serif;font-size:16px;font-weight:400;color:#000;">0</div><div style="position:absolute;left:1089.81px;top:370.00px;white-space:pre;line-height:17px;font-family:&quot;Liberation Sans&quot;,sans-serif;font-size:16px;font-weight:400;color:#000;">0</div><div style="position:absolute;left:1120.33px;top:370.00px;white-space:pre;line-height:17px;font-family:&quot;Liberation Sans&quot;,sans-serif;font-size:16px;font-weight:400;color:#000;">On</div><div style="position:absolute;left:1284.28px;top:370.00px;white-space:pre;line-height:17px;font-family:&quot;Liberation Sans&quot;,sans-serif;font-size:16px;font-weight:400;color:#000;">+</div><div style="position:absolute;left:1386.28px;top:370.00px;white-space:pre;line-height:17px;font-family:&quot;Liberation Sans&quot;,sans-serif;font-size:16px;font-weight:400;color:#000;">+</div><div style="position:absolute;left:1501.28px;top:370.00px;white-space:pre;line-height:17px;font-family:&quot;Liberation Sans&quot;,sans-serif;font-size:16px;font-weight:400;color:#000;">+</div><div style="position:absolute;left:37.28px;top:394.00px;white-space:pre;line-height:17px;font-family:&quot;Liberation Sans&quot;,sans-serif;font-size:16px;font-weight:400;color:#000;letter-spacing:0.2px">45.228.233.94:999</div><div style="position:absolute;left:608.81px;top:394.00px;white-space:pre;line-height:17px;font-family:&quot;Liberation Sans&quot;,sans-serif;font-size:16px;font-weight:400;color:#000;">1</div><div style="position:absolute;left:765.81px;top:394.00px;white-space:pre;line-height:17px;font-family:&quot;Liberation Sans&quot;,sans-serif;font-size:16px;font-weight:400;color:#000;">0</div><div style="position:absolute;left:923.81px;top:394.00px;white-space:pre;line-height:17px;font-family:&quot;Liberation Sans&quot;,sans-serif;font-size:16px;font-weight:400;color:#000;">0</div><div style="position:absolute;left:1089.81px;top:394.00px;white-space:pre;line-height:17px;font-family:&quot;Liberation Sans&quot;,sans-serif;font-size:16px;font-weight:400;color:#000;">0</div><div style="position:absolute;left:1120.33px;top:394.00px;white-space:pre;line-height:17px;font-family:&quot;Liberation Sans&quot;,sans-serif;font-size:16px;font-weight:400;color:#000;">On</div><div style="position:absolute;left:1284.28px;top:394.00px;white-space:pre;line-height:17px;font-family:&quot;Liberation Sans&quot;,sans-serif;font-size:16px;font-weight:400;color:#000;">+</div><div style="position:absolute;left:1386.28px;top:394.00px;white-space:pre;line-height:17px;font-family:&quot;Liberation Sans&quot;,sans-serif;font-size:16px;font-weight:400;color:#000;">+</div><div style="position:absolute;left:1501.28px;top:394.00px;white-space:pre;line-height:17px;font-family:&quot;Liberation Sans&quot;,sans-serif;font-size:16px;font-weight:400;color:#000;">+</div><div style="position:absolute;left:37.28px;top:418.00px;white-space:pre;line-height:17px;font-family:&quot;Liberation Sans&quot;,sans-serif;font-size:16px;font-weight:400;color:#000;letter-spacing:0.2px">206.62.64.34:8080</div><div style="position:absolute;left:608.81px;top:418.00px;white-space:pre;line-height:17px;font-family:&quot;Liberation Sans&quot;,sans-serif;font-size:16px;font-weight:400;color:#000;">1</div><div style="position:absolute;left:765.81px;top:418.00px;white-space:pre;line-height:17px;font-family:&quot;Liberation Sans&quot;,sans-serif;font-size:16px;font-weight:400;color:#000;">0</div><div style="position:absolute;left:923.81px;top:418.00px;white-space:pre;line-height:17px;font-family:&quot;Liberation Sans&quot;,sans-serif;font-size:16px;font-weight:400;color:#000;">0</div><div style="position:absolute;left:1089.81px;top:418.00px;white-space:pre;line-height:17px;font-family:&quot;Liberation Sans&quot;,sans-serif;font-size:16px;font-weight:400;color:#000;">0</div><div style="position:absolute;left:1120.33px;top:418.00px;white-space:pre;line-height:17px;font-family:&quot;Liberation Sans&quot;,sans-serif;font-size:16px;font-weight:400;color:#000;">On</div><div style="position:absolute;left:1284.28px;top:418.00px;white-space:pre;line-height:17px;font-family:&quot;Liberation Sans&quot;,sans-serif;font-size:16px;font-weight:400;color:#000;">+</div><div style="position:absolute;left:1386.28px;top:418.00px;white-space:pre;line-height:17px;font-family:&quot;Liberation Sans&quot;,sans-serif;font-size:16px;font-weight:400;color:#000;">+</div><div style="position:absolute;left:1501.28px;top:418.00px;white-space:pre;line-height:17px;font-family:&quot;Liberation Sans&quot;,sans-serif;font-size:16px;font-weight:400;color:#000;">+</div><div style="position:absolute;left:37.28px;top:442.00px;white-space:pre;line-height:17px;font-family:&quot;Liberation Sans&quot;,sans-serif;font-size:16px;font-weight:400;color:#000;letter-spacing:0.2px">93.171.220.229:8888</div><div style="position:absolute;left:608.81px;top:442.00px;white-space:pre;line-height:17px;font-family:&quot;Liberation Sans&quot;,sans-serif;font-size:16px;font-weight:400;color:#000;">1</div><div style="position:absolute;left:765.81px;top:442.00px;white-space:pre;line-height:17px;font-family:&quot;Liberation Sans&quot;,sans-serif;font-size:16px;font-weight:400;color:#000;">0</div><div style="position:absolute;left:923.81px;top:442.00px;white-space:pre;line-height:17px;font-family:&quot;Liberation Sans&quot;,sans-serif;font-size:16px;font-weight:400;color:#000;">0</div><div style="position:absolute;left:1089.81px;top:442.00px;white-space:pre;line-height:17px;font-family:&quot;Liberation Sans&quot;,sans-serif;font-size:16px;font-weight:400;color:#000;">0</div><div style="position:absolute;left:1120.33px;top:442.00px;white-space:pre;line-height:17px;font-family:&quot;Liberation Sans&quot;,sans-serif;font-size:16px;font-weight:400;color:#000;">On</div><div style="position:absolute;left:1284.28px;top:442.00px;white-space:pre;line-height:17px;font-family:&quot;Liberation Sans&quot;,sans-serif;font-size:16px;font-weight:400;color:#000;">+</div><div style="position:absolute;left:1386.28px;top:442.00px;white-space:pre;line-height:17px;font-family:&quot;Liberation Sans&quot;,sans-serif;font-size:16px;font-weight:400;color:#000;">+</div><div style="position:absolute;left:1501.28px;top:442.00px;white-space:pre;line-height:17px;font-family:&quot;Liberation Sans&quot;,sans-serif;font-size:16px;font-weight:400;color:#000;">+</div><div style="position:absolute;left:37.28px;top:466.00px;white-space:pre;line-height:17px;font-family:&quot;Liberation Sans&quot;,sans-serif;font-size:16px;font-weight:400;color:#000;letter-spacing:0.2px">216.87.69.230:8383</div><div style="position:absolute;left:608.81px;top:466.00px;white-space:pre;line-height:17px;font-family:&quot;Liberation Sans&quot;,sans-serif;font-size:16px;font-weight:400;color:#000;">1</div><div style="position:absolute;left:765.81px;top:466.00px;white-space:pre;line-height:17px;font-family:&quot;Liberation Sans&quot;,sans-serif;font-size:16px;font-weight:400;color:#000;">0</div><div style="position:absolute;left:923.81px;top:466.00px;white-space:pre;line-height:17px;font-family:&quot;Liberation Sans&quot;,sans-serif;font-size:16px;font-weight:400;color:#000;">0</div><div style="position:absolute;left:1089.81px;top:466.00px;white-space:pre;line-height:17px;font-family:&quot;Liberation Sans&quot;,sans-serif;font-size:16px;font-weight:400;color:#000;">0</div><div style="position:absolute;left:1120.33px;top:466.00px;white-space:pre;line-height:17px;font-family:&quot;Liberation Sans&quot;,sans-serif;font-size:16px;font-weight:400;color:#000;">On</div><div style="position:absolute;left:1284.28px;top:466.00px;white-space:pre;line-height:17px;font-family:&quot;Liberation Sans&quot;,sans-serif;font-size:16px;font-weight:400;color:#000;">+</div><div style="position:absolute;left:1386.28px;top:466.00px;white-space:pre;line-height:17px;font-family:&quot;Liberation Sans&quot;,sans-serif;font-size:16px;font-weight:400;color:#000;">+</div><div style="position:absolute;left:1501.28px;top:466.00px;white-space:pre;line-height:17px;font-family:&quot;Liberation Sans&quot;,sans-serif;font-size:16px;font-weight:400;color:#000;">+</div><div style="position:absolute;left:37.28px;top:490.00px;white-space:pre;line-height:17px;font-family:&quot;Liberation Sans&quot;,sans-serif;font-size:16px;font-weight:400;color:#000;letter-spacing:0.2px">153.101.67.170:9002</div><div style="position:absolute;left:608.81px;top:490.00px;white-space:pre;line-height:17px;font-family:&quot;Liberation Sans&quot;,sans-serif;font-size:16px;font-weight:400;color:#000;">1</div><div style="position:absolute;left:765.81px;top:490.00px;white-space:pre;line-height:17px;font-family:&quot;Liberation Sans&quot;,sans-serif;font-size:16px;font-weight:400;color:#000;">0</div><div style="position:absolute;left:923.81px;top:490.00px;white-space:pre;line-height:17px;font-family:&quot;Liberation Sans&quot;,sans-serif;font-size:16px;font-weight:400;color:#000;">0</div><div style="position:absolute;left:1089.81px;top:490.00px;white-space:pre;line-height:17px;font-family:&quot;Liberation Sans&quot;,sans-serif;font-size:16px;font-weight:400;color:#000;">0</div><div style="position:absolute;left:1120.33px;top:490.00px;white-space:pre;line-height:17px;font-family:&quot;Liberation Sans&quot;,sans-serif;font-size:16px;font-weight:400;color:#000;">On</div><div style="position:absolute;left:1284.28px;top:490.00px;white-space:pre;line-height:17px;font-family:&quot;Liberation Sans&quot;,sans-serif;font-size:16px;font-weight:400;color:#000;">+</div><div style="position:absolute;left:1386.28px;top:490.00px;white-space:pre;line-height:17px;font-family:&quot;Liberation Sans&quot;,sans-serif;font-size:16px;font-weight:400;color:#000;">+</div><div style="position:absolute;left:1501.28px;top:490.00px;white-space:pre;line-height:17px;font-family:&quot;Liberation Sans&quot;,sans-serif;font-size:16px;font-weight:400;color:#000;">+</div><div style="position:absolute;left:37.28px;top:514.00px;white-space:pre;line-height:17px;font-family:&quot;Liberation Sans&quot;,sans-serif;font-size:16px;font-weight:400;color:#000;letter-spacing:0.2px">189.240.60.163:9090</div><div style="position:absolute;left:608.81px;top:514.00px;white-space:pre;line-height:17px;font-family:&quot;Liberation Sans&quot;,sans-serif;font-size:16px;font-weight:400;color:#000;">1</div><div style="position:absolute;left:765.81px;top:514.00px;white-space:pre;line-height:17px;font-family:&quot;Liberation Sans&quot;,sans-serif;font-size:16px;font-weight:400;color:#000;">0</div><div style="position:absolute;left:923.81px;top:514.00px;white-space:pre;line-height:17px;font-family:&quot;Liberation Sans&quot;,sans-serif;font-size:16px;font-weight:400;color:#000;">0</div><div style="position:absolute;left:1089.81px;top:514.00px;white-space:pre;line-height:17px;font-family:&quot;Liberation Sans&quot;,sans-serif;font-size:16px;font-weight:400;color:#000;">0</div><div style="position:absolute;left:1120.33px;top:514.00px;white-space:pre;line-height:17px;font-family:&quot;Liberation Sans&quot;,sans-serif;font-size:16px;font-weight:400;color:#000;">On</div><div style="position:absolute;left:1284.28px;top:514.00px;white-space:pre;line-height:17px;font-family:&quot;Liberation Sans&quot;,sans-serif;font-size:16px;font-weight:400;color:#000;">+</div><div style="position:absolute;left:1386.28px;top:514.00px;white-space:pre;line-height:17px;font-family:&quot;Liberation Sans&quot;,sans-serif;font-size:16px;font-weight:400;color:#000;">+</div><div style="position:absolute;left:1501.28px;top:514.00px;white-space:pre;line-height:17px;font-family:&quot;Liberation Sans&quot;,sans-serif;font-size:16px;font-weight:400;color:#000;">+</div><div style="position:absolute;left:37.28px;top:538.00px;white-space:pre;line-height:17px;font-family:&quot;Liberation Sans&quot;,sans-serif;font-size:16px;font-weight:400;color:#000;letter-spacing:0.2px">195.12.191.2:80</div><div style="position:absolute;left:608.81px;top:538.00px;white-space:pre;line-height:17px;font-family:&quot;Liberation Sans&quot;,sans-serif;font-size:16px;font-weight:400;color:#000;">1</div><div style="position:absolute;left:765.81px;top:538.00px;white-space:pre;line-height:17px;font-family:&quot;Liberation Sans&quot;,sans-serif;font-size:16px;font-weight:400;color:#000;">0</div><div style="position:absolute;left:923.81px;top:538.00px;white-space:pre;line-height:17px;font-family:&quot;Liberation Sans&quot;,sans-serif;font-size:16px;font-weight:400;color:#000;">0</div><div style="position:absolute;left:1089.81px;top:538.00px;white-space:pre;line-height:17px;font-family:&quot;Liberation Sans&quot;,sans-serif;font-size:16px;font-weight:400;color:#000;">0</div><div style="position:absolute;left:1120.33px;top:538.00px;white-space:pre;line-height:17px;font-family:&quot;Liberation Sans&quot;,sans-serif;font-size:16px;font-weight:400;color:#000;">On</div><div style="position:absolute;left:1284.28px;top:538.00px;white-space:pre;line-height:17px;font-family:&quot;Liberation Sans&quot;,sans-serif;font-size:16px;font-weight:400;color:#000;">+</div><div style="position:absolute;left:1386.28px;top:538.00px;white-space:pre;line-height:17px;font-family:&quot;Liberation Sans&quot;,sans-serif;font-size:16px;font-weight:400;color:#000;">+</div><div style="position:absolute;left:1501.28px;top:538.00px;white-space:pre;line-height:17px;font-family:&quot;Liberation Sans&quot;,sans-serif;font-size:16px;font-weight:400;color:#000;">+</div><div style="position:absolute;left:37.28px;top:562.00px;white-space:pre;line-height:17px;font-family:&quot;Liberation Sans&quot;,sans-serif;font-size:16px;font-weight:400;color:#000;letter-spacing:0.2px">61.158.175.38:9002</div><div style="position:absolute;left:608.81px;top:562.00px;white-space:pre;line-height:17px;font-family:&quot;Liberation Sans&quot;,sans-serif;font-size:16px;font-weight:400;color:#000;">1</div><div style="position:absolute;left:765.81px;top:562.00px;white-space:pre;line-height:17px;font-family:&quot;Liberation Sans&quot;,sans-serif;font-size:16px;font-weight:400;color:#000;">0</div><div style="position:absolute;left:923.81px;top:562.00px;white-space:pre;line-height:17px;font-family:&quot;Liberation Sans&quot;,sans-serif;font-size:16px;font-weight:400;color:#000;">0</div><div style="position:absolute;left:1089.81px;top:562.00px;white-space:pre;line-height:17px;font-family:&quot;Liberation Sans&quot;,sans-serif;font-size:16px;font-weight:400;color:#000;">0</div><div style="position:absolute;left:1120.33px;top:562.00px;white-space:pre;line-height:17px;font-family:&quot;Liberation Sans&quot;,sans-serif;font-size:16px;font-weight:400;color:#000;">On</div><div style="position:absolute;left:1284.28px;top:562.00px;white-space:pre;line-height:17px;font-family:&quot;Liberation Sans&quot;,sans-serif;font-size:16px;font-weight:400;color:#000;">+</div><div style="position:absolute;left:1386.28px;top:562.00px;white-space:pre;line-height:17px;font-family:&quot;Liberation Sans&quot;,sans-serif;font-size:16px;font-weight:400;color:#000;">+</div><div style="position:absolute;left:1501.28px;top:562.00px;white-space:pre;line-height:17px;font-family:&quot;Liberation Sans&quot;,sans-serif;font-size:16px;font-weight:400;color:#000;">+</div><div style="position:absolute;left:37.28px;top:586.00px;white-space:pre;line-height:17px;font-family:&quot;Liberation Sans&quot;,sans-serif;font-size:16px;font-weight:400;color:#000;letter-spacing:0.2px">133.18.234.13:80</div><div style="position:absolute;left:608.81px;top:586.00px;white-space:pre;line-height:17px;font-family:&quot;Liberation Sans&quot;,sans-serif;font-size:16px;font-weight:400;color:#000;">1</div><div style="position:absolute;left:765.81px;top:586.00px;white-space:pre;line-height:17px;font-family:&quot;Liberation Sans&quot;,sans-serif;font-size:16px;font-weight:400;color:#000;">0</div><div style="position:absolute;left:923.81px;top:586.00px;white-space:pre;line-height:17px;font-family:&quot;Liberation Sans&quot;,sans-serif;font-size:16px;font-weight:400;color:#000;">0</div><div style="position:absolute;left:1089.81px;top:586.00px;white-space:pre;line-height:17px;font-family:&quot;Liberation Sans&quot;,sans-serif;font-size:16px;font-weight:400;color:#000;">0</div><div style="position:absolute;left:1120.33px;top:586.00px;white-space:pre;line-height:17px;font-family:&quot;Liberation Sans&quot;,sans-serif;font-size:16px;font-weight:400;color:#000;">On</div><div style="position:absolute;left:1284.28px;top:586.00px;white-space:pre;line-height:17px;font-family:&quot;Liberation Sans&quot;,sans-serif;font-size:16px;font-weight:400;color:#000;">+</div><div style="position:absolute;left:1386.28px;top:586.00px;white-space:pre;line-height:17px;font-family:&quot;Liberation Sans&quot;,sans-serif;font-size:16px;font-weight:400;color:#000;">+</div><div style="position:absolute;left:1501.28px;top:586.00px;white-space:pre;line-height:17px;font-family:&quot;Liberation Sans&quot;,sans-serif;font-size:16px;font-weight:400;color:#000;">+</div><div style="position:absolute;left:37.28px;top:610.00px;white-space:pre;line-height:17px;font-family:&quot;Liberation Sans&quot;,sans-serif;font-size:16px;font-weight:400;color:#000;letter-spacing:0.2px">47.91.104.88:3128</div><div style="position:absolute;left:608.81px;top:610.00px;white-space:pre;line-height:17px;font-family:&quot;Liberation Sans&quot;,sans-serif;font-size:16px;font-weight:400;color:#000;">1</div><div style="position:absolute;left:765.81px;top:610.00px;white-space:pre;line-height:17px;font-family:&quot;Liberation Sans&quot;,sans-serif;font-size:16px;font-weight:400;color:#000;">0</div><div style="position:absolute;left:923.81px;top:610.00px;white-space:pre;line-height:17px;font-family:&quot;Liberation Sans&quot;,sans-serif;font-size:16px;font-weight:400;color:#000;">0</div><div style="position:absolute;left:1089.81px;top:610.00px;white-space:pre;line-height:17px;font-family:&quot;Liberation Sans&quot;,sans-serif;font-size:16px;font-weight:400;color:#000;">0</div><div style="position:absolute;left:1120.33px;top:610.00px;white-space:pre;line-height:17px;font-family:&quot;Liberation Sans&quot;,sans-serif;font-size:16px;font-weight:400;color:#000;">On</div><div style="position:absolute;left:1284.28px;top:610.00px;white-space:pre;line-height:17px;font-family:&quot;Liberation Sans&quot;,sans-serif;font-size:16px;font-weight:400;color:#000;">+</div><div style="position:absolute;left:1386.28px;top:610.00px;white-space:pre;line-height:17px;font-family:&quot;Liberation Sans&quot;,sans-serif;font-size:16px;font-weight:400;color:#000;">+</div><div style="position:absolute;left:1501.28px;top:610.00px;white-space:pre;line-height:17px;font-family:&quot;Liberation Sans&quot;,sans-serif;font-size:16px;font-weight:400;color:#000;">+</div><div style="position:absolute;left:0px;top:963px;width:1894px;height:40px;background:#fff"></div><div style="position:absolute;left:0px;top:985px;width:1894px;height:18px;background:#efefef"></div><div style="position:absolute;left:0px;top:963px;width:517px;height:40px;background:#efefef;border-top:1px solid #dedede;border-top-right-radius:8px;box-sizing:border-box"></div><div style="position:absolute;left:599px;top:963px;width:1295px;height:40px;background:#efefef;border-top:1px solid #dedede;border-top-left-radius:8px;box-sizing:border-box"></div><div style="position:absolute;left:516px;top:963px;width:84px;height:35px;background:#fff;border-radius:0 0 7px 7px;box-shadow:0 0.5px 0.5px rgba(0,0,0,0.12)"></div><div style="position:absolute;left:527px;top:993px;width:62px;height:2px;background:#107c41"></div><div style="position:absolute;left:152.22px;top:975.00px;white-space:pre;line-height:19px;font-family:&quot;Liberation Sans&quot;,sans-serif;font-size:17px;font-weight:400;color:#333333;transform:scaleX(1.0156);transform-origin:0 0;">Системный</div><div style="position:absolute;left:279.24px;top:975.00px;white-space:pre;line-height:19px;font-family:&quot;Liberation Sans&quot;,sans-serif;font-size:17px;font-weight:400;color:#333333;">Ban аккаунты</div><div style="position:absolute;left:417.21px;top:975.00px;white-space:pre;line-height:19px;font-family:&quot;Liberation Sans&quot;,sans-serif;font-size:17px;font-weight:400;color:#333333;transform:scaleX(1.0377);transform-origin:0 0;">Аккаунты</div><div style="position:absolute;left:622.23px;top:975.00px;white-space:pre;line-height:19px;font-family:&quot;Liberation Sans&quot;,sans-serif;font-size:17px;font-weight:400;color:#333333;transform:scaleX(1.0116);transform-origin:0 0;">Эмуляция</div><div style="position:absolute;left:736.24px;top:975.00px;white-space:pre;line-height:19px;font-family:&quot;Liberation Sans&quot;,sans-serif;font-size:17px;font-weight:400;color:#333333;transform:scaleX(0.9904);transform-origin:0 0;">Задачи</div><div style="position:absolute;left:826.21px;top:975.00px;white-space:pre;line-height:19px;font-family:&quot;Liberation Sans&quot;,sans-serif;font-size:17px;font-weight:400;color:#333333;transform:scaleX(1.0315);transform-origin:0 0;">Подзадачи</div><div style="position:absolute;left:948.20px;top:975.00px;white-space:pre;line-height:19px;font-family:&quot;Liberation Sans&quot;,sans-serif;font-size:17px;font-weight:400;color:#333333;transform:scaleX(1.0516);transform-origin:0 0;">Синх. таблицы</div><div style="position:absolute;left:529.17px;top:971.00px;white-space:pre;line-height:20px;font-family:&quot;Liberation Sans&quot;,sans-serif;font-size:17.5px;font-weight:400;color:#262626;transform:scaleX(1.0540);transform-origin:0 0;-webkit-text-stroke:0.45px #262626">Прокси</div><div style="position:absolute;left:259px;top:971px;width:1px;height:23px;background:#d0d0d0"></div><div style="position:absolute;left:401px;top:971px;width:1px;height:23px;background:#d0d0d0"></div><div style="position:absolute;left:511px;top:971px;width:1px;height:23px;background:#d0d0d0"></div><div style="position:absolute;left:604px;top:971px;width:1px;height:23px;background:#d0d0d0"></div><div style="position:absolute;left:718px;top:971px;width:1px;height:23px;background:#d0d0d0"></div><div style="position:absolute;left:808px;top:971px;width:1px;height:23px;background:#d0d0d0"></div><div style="position:absolute;left:930px;top:971px;width:1px;height:23px;background:#d0d0d0"></div><div style="position:absolute;left:1057px;top:965px;width:80px;height:36px;background:#f0f0f0"></div><div style="position:absolute;left:0px;top:1003px;width:1920px;height:1px;background:#d6d6d6"></div><div style="position:absolute;left:0px;top:1004px;width:1920px;height:24px;background:#f3f3f3"></div><div style="position:absolute;left:13.38px;top:1010.00px;white-space:pre;line-height:15px;font-family:&quot;Liberation Sans&quot;,sans-serif;font-size:13.5px;font-weight:400;color:#333333;transform:scaleX(1.0127);transform-origin:0 0;">Готово</div><div style="position:absolute;left:75.45px;top:1010.00px;white-space:pre;line-height:15px;font-family:&quot;Liberation Sans&quot;,sans-serif;font-size:13.5px;font-weight:400;color:#333333;transform:scaleX(0.9060);transform-origin:0 0;">Вычислить</div><div style="position:absolute;left:184.42px;top:1010.00px;white-space:pre;line-height:15px;font-family:&quot;Liberation Sans&quot;,sans-serif;font-size:13.5px;font-weight:700;color:#1a1a1a;transform:scaleX(0.9629);transform-origin:0 0;">Специальные возможности: проверьте рекомендации</div><div style="position:absolute;left:1545px;top:1004px;width:48px;height:24px;background:#d6d6d6"></div><div style="position:absolute;left:1874.43px;top:1010.00px;white-space:pre;line-height:15px;font-family:&quot;Liberation Sans&quot;,sans-serif;font-size:13.5px;font-weight:400;color:#333333;transform:scaleX(0.9460);transform-origin:0 0;">100 %</div><svg style="position:absolute;left:0;top:0" width="1920" height="1028" viewBox="0 0 1920 1028"><rect x="23.5" y="19.5" width="16.5" height="20.5" rx="1" fill="#fff"/><rect x="25.2" y="21.3" width="5.8" height="2.3" fill="#107c41"/><rect x="32.8" y="21.3" width="6" height="2.3" fill="#107c41"/><rect x="32.8" y="26" width="6" height="3" fill="#107c41"/><rect x="32.8" y="31.5" width="6" height="3" fill="#107c41"/><rect x="25.2" y="36" width="5.8" height="2.5" fill="#107c41"/><rect x="32.8" y="36" width="6" height="2.5" fill="#107c41"/><rect x="20" y="23.6" width="12" height="12.4" rx="0.8" fill="#fff"/><path d="M23 25.8 L29.6 33.8 M29.6 25.8 L23 33.8" stroke="#107c41" stroke-width="1.9"/><rect x="167.5" y="17.5" width="53.5" height="24.5" rx="12.25" stroke="#fff" stroke-width="1.3" fill="none"/><circle cx="180" cy="30" r="8.8" fill="#fff"/><path d="M235.8 20.3 H254.4 V39.4 H239.3 L235.8 35.9 Z" stroke="#fff" stroke-width="1.3" fill="none"/><path d="M239.5 20.3 V27.2 H250.4 V20.3" stroke="#fff" stroke-width="1.3" fill="none"/><path d="M241 39.4 V32.8 H250.5 V39.4" stroke="#fff" stroke-width="1.3" fill="none"/><path d="M278 40 L287.2 30.8 A6.6 6.6 0 0 0 277.6 21.5 L272 27" stroke="#fff" stroke-width="1.3" fill="none"/><path d="M271.5 20.2 V28 H279.6" stroke="#fff" stroke-width="1.3" fill="none"/><path d="M297.5 27.5 L301.0 31.5 L304.5 27.5" stroke="#ffffff" stroke-width="1.2" fill="none"/><path d="M330 40 L320.8 30.8 A6.6 6.6 0 0 1 330.4 21.5 L336 27" stroke="#73b893" stroke-width="1.3" fill="none"/><path d="M336.5 20.2 V28 H328.4" stroke="#73b893" stroke-width="1.3" fill="none"/><path d="M346.5 27.5 L350.0 31.5 L353.5 27.5" stroke="#5aa77d" stroke-width="1.1" fill="none"/><path d="M371 27.5 H380" stroke="#fff" stroke-width="1.2"/><path d="M372 31 L375.5 34.6 L379 31" stroke="#ffffff" stroke-width="1.2" fill="none"/><path d="M449.5 26.5 L455.0 32.0 L460.5 26.5" stroke="#ffffff" stroke-width="1.3" fill="none"/><circle cx="769" cy="26.5" r="5.6" stroke="#1d5e3a" stroke-width="1.3" fill="none"/><path d="M765 30.5 L758 38" stroke="#1d5e3a" stroke-width="1.4"/><path d="M1763 29.5 H1777" stroke="#fff" stroke-width="1.1"/><rect x="1823.5" y="26.5" width="10" height="10" rx="2" stroke="#fff" stroke-width="1.1" fill="none"/><path d="M1826 24 Q1826 23.5 1828 23.5 H1834 Q1836.5 23.5 1836.5 26 V32 Q1836.5 34 1836 34" stroke="#fff" stroke-width="1.1" fill="none"/><path d="M1883.5 23.5 L1896.5 36.5 M1896.5 23.5 L1883.5 36.5" stroke="#fff" stroke-width="1.2"/><path d="M1607.5 72.5 H1620 V80.5 H1612.5 L1609 84 V80.5 H1607.5 Z" stroke="#333" stroke-width="1.1" fill="none"/><path d="M1751.6 77.2 V85.6 H1763.2 V80.4" stroke="#fff" stroke-width="1.2" fill="none"/><path d="M1754.2 80.6 Q1755 75.8 1760.5 75.3 V71.8 L1765 76.3 L1760.5 80.6 V78.3 Q1756.5 78.3 1754.2 80.6 Z" stroke="#fff" stroke-width="1.1" fill="none" stroke-linejoin="round"/><path d="M1893.5 77.5 L1896.5 80.7 L1899.5 77.5" stroke="#ffffff" stroke-width="1.2" fill="none"/><rect x="44.8" y="113.8" width="25.4" height="29" fill="#fdefcf" stroke="#e8912d" stroke-width="1.6"/><rect x="47.5" y="116.5" width="20" height="23.5" fill="#fff"/><path d="M49.8 117.5 V112.5 H54.5 Q55 108.5 57.8 108.5 Q60.6 108.5 61.1 112.5 H65.8 V117.5 Z" fill="#fff" stroke="#7a7a7a" stroke-width="1.3"/><rect x="61.4" y="123.4" width="16" height="22" fill="#fff" stroke="#505050" stroke-width="1.4"/><path d="M54 177.5 L57.5 181.0 L61 177.5" stroke="#424242" stroke-width="1.2" fill="none"/><path d="M104.6 107.3 L110.9 121.9 M111.4 107.3 L105 121.9" stroke="#3a3a3a" stroke-width="1.1"/><circle cx="104.1" cy="124.3" r="2.1" stroke="#2b8ad8" stroke-width="1.3" fill="none"/><circle cx="111.7" cy="124.3" r="2.1" stroke="#2b8ad8" stroke-width="1.3" fill="none"/><path d="M105.5 143 V139.5 H98.8 V156 H105.5" stroke="#444" stroke-width="1.2" fill="none"/><path d="M106.2 143.2 H113.5 L117.6 147.3 V158.3 H106.2 Z" stroke="#444" stroke-width="1.3" fill="#fff"/><path d="M109.5 152 H114.3 M109.5 154.8 H114.3" stroke="#666" stroke-width="0.9"/><path d="M128 148 L131.5 151.5 L135 148" stroke="#424242" stroke-width="1.2" fill="none"/><path d="M98.8 180.8 Q103 178.2 106.3 176.3 L113.8 183.8 Q111.5 186.5 106.5 189.8 Q101.8 186 98.8 180.8 Z" stroke="#e07a10" stroke-width="1.5" fill="#fff" stroke-linejoin="round"/><path d="M103.5 185.3 L110.8 186.3 Q108.5 188.2 106.5 189.3 Z" fill="#fbd38c"/><path d="M105.8 176.8 L110.3 172.3 L114.3 176.3 L109.8 180.8 Z" stroke="#3a3a3a" stroke-width="1.3" fill="#fff" stroke-linejoin="round"/><path d="M111.8 173.8 L116 169.6 Q117.2 168.6 118.2 169.6 Q119.2 170.8 118.2 171.8 L114 176" stroke="#3a3a3a" stroke-width="1.3" fill="#fff" stroke-linejoin="round"/><path d="M138.0 214 V205.5 H146.5" stroke="#555" stroke-width="1" fill="none"/><path d="M140.5 208 L147.5 215 M147.5 210.5 V215 H143.0" stroke="#555" stroke-width="1" fill="none"/><path d="M295.5 127.3 L299.0 130.9 L302.5 127.3" stroke="#424242" stroke-width="1.2" fill="none"/><path d="M360 126 L363.5 129.6 L367 126" stroke="#424242" stroke-width="1.2" fill="none"/><path d="M379.8 132.6 L386 117.5 L392.3 132.6 M382 127.6 H390" stroke="#3a3a3a" stroke-width="1.3" fill="none"/><path d="M392 121 L395 118.3 L398 121" stroke="#2b8ad8" stroke-width="1.2" fill="none"/><path d="M413.5 132.6 L418.7 120.7 L424 132.6 M415.3 128.3 H422.2" stroke="#3a3a3a" stroke-width="1.3" fill="none"/><path d="M424.5 118.5 L427.3 121 L430 118.5" stroke="#2b8ad8" stroke-width="1.2" fill="none"/><path d="M262 165.5 L265.5 169.1 L269 165.5" stroke="#424242" stroke-width="1.2" fill="none"/><path d="M278.5 152 V181 M332.5 152 V181" stroke="#d6d6d6" stroke-width="1"/><rect x="286.5" y="157.5" width="18" height="17" stroke="#777" stroke-width="1" stroke-dasharray="1.2 1.2" fill="none"/><path d="M295.5 158 V174 M287 166 H304" stroke="#888" stroke-width="1" stroke-dasharray="1.2 1.2"/><path d="M286 175.3 H305" stroke="#444" stroke-width="1.6"/><path d="M316 166 L319.5 169.6 L323 166" stroke="#424242" stroke-width="1.2" fill="none"/><path d="M343.5 165 L350 158.5 L356.3 165 L349.8 171.3 Z" stroke="#3a3a3a" stroke-width="1.3" fill="#fff"/><path d="M349.5 162 V158 Q351 156 352.5 158 V162" stroke="#3a3a3a" stroke-width="1.1" fill="none"/><path d="M355 162 Q357.5 162.5 357.3 169" stroke="#1f6fc0" stroke-width="1.6" fill="none"/><rect x="340" y="172" width="20" height="5" fill="#ffff00"/><path d="M370 166 L373.5 169.6 L377 166" stroke="#424242" stroke-width="1.2" fill="none"/><path d="M395.5 171 L401 157.5 L406.5 171 M397.5 166 H404.5" stroke="#3a3a3a" stroke-width="1.3" fill="none"/><rect x="391" y="172" width="20" height="5" fill="#ff0000"/><path d="M421 166 L424.5 169.6 L428 166" stroke="#424242" stroke-width="1.2" fill="none"/><path d="M430.5 214 V205.5 H439" stroke="#555" stroke-width="1" fill="none"/><path d="M433 208 L440 215 M440 210.5 V215 H435.5" stroke="#555" stroke-width="1" fill="none"/><path d="M461 117.6 H479" stroke="#424242" stroke-width="1.3"/><path d="M464 122.3 H476" stroke="#424242" stroke-width="1.3"/><path d="M461 127.8 H479" stroke="#424242" stroke-width="1.3"/><path d="M493 121 H511" stroke="#424242" stroke-width="1.3"/><path d="M496 126.5 H508" stroke="#424242" stroke-width="1.3"/><path d="M493 131.5 H511" stroke="#424242" stroke-width="1.3"/><rect x="519.5" y="112.5" width="29" height="28" rx="4" fill="#ebebeb" stroke="#8a8a8a" stroke-width="1"/><path d="M525 125.7 H543" stroke="#424242" stroke-width="1.3"/><path d="M528 131 H540" stroke="#424242" stroke-width="1.3"/><path d="M525 136 H543" stroke="#424242" stroke-width="1.3"/><path d="M562.6 135.2 L575.5 122.5 M570.5 122.5 H575.7 V127.5" stroke="#2b8ad8" stroke-width="1.3" fill="none"/><text x="556.5" y="128.5" transform="rotate(-45 563 124)" font-family="Liberation Sans" font-size="12.5" fill="#444">ab</text><path d="M584 125.5 L587.5 129.1 L591 125.5" stroke="#424242" stroke-width="1.2" fill="none"/><path d="M461 158.9 H479" stroke="#424242" stroke-width="1.3"/><path d="M461 163.6 H473" stroke="#424242" stroke-width="1.3"/><path d="M461 168.8 H479" stroke="#424242" stroke-width="1.3"/><path d="M461 173.8 H473" stroke="#424242" stroke-width="1.3"/><path d="M493 158.9 H511" stroke="#424242" stroke-width="1.3"/><path d="M496 163.6 H508" stroke="#424242" stroke-width="1.3"/><path d="M493 168.8 H511" stroke="#424242" stroke-width="1.3"/><path d="M496 173.8 H508" stroke="#424242" stroke-width="1.3"/><path d="M525 158.9 H543" stroke="#424242" stroke-width="1.3"/><path d="M531 163.6 H543" stroke="#424242" stroke-width="1.3"/><path d="M525 168.8 H543" stroke="#424242" stroke-width="1.3"/><path d="M531 173.8 H543" stroke="#424242" stroke-width="1.3"/><path d="M557 158.9 H575" stroke="#424242" stroke-width="1.3"/><path d="M567 163.6 H575" stroke="#424242" stroke-width="1.3"/><path d="M567 168.8 H575" stroke="#424242" stroke-width="1.3"/><path d="M557 173.8 H575" stroke="#424242" stroke-width="1.3"/><path d="M566.5 166.2 H558 M561 163.2 L558 166.2 L561 169.2" stroke="#2b8ad8" stroke-width="1.2" fill="none"/><path d="M589 158.9 H607" stroke="#424242" stroke-width="1.3"/><path d="M599 163.6 H607" stroke="#424242" stroke-width="1.3"/><path d="M599 168.8 H607" stroke="#424242" stroke-width="1.3"/><path d="M589 173.8 H607" stroke="#424242" stroke-width="1.3"/><path d="M589.5 166.2 H598 M595 163.2 L598 166.2 L595 169.2" stroke="#2b8ad8" stroke-width="1.2" fill="none"/><path d="M620.5 111 V189" stroke="#d6d6d6" stroke-width="1"/><text x="635.5" y="127" font-family="Liberation Sans" font-size="12.5" fill="#444" letter-spacing="-0.3">ab</text><text x="635.5" y="136.5" font-family="Liberation Sans" font-size="12.5" fill="#444">c</text><path d="M652.5 127.5 Q653.5 132.5 644.5 132.5 M647.5 129 L644 132.5 L647.5 136" stroke="#2b8ad8" stroke-width="1.3" fill="none"/><rect x="633.5" y="157.5" width="18" height="18" stroke="#555" stroke-width="1.1" fill="#fff"/><path d="M633.5 161 H651.5 M633.5 172 H651.5 M642.5 157.5 V161 M642.5 172 V175.5" stroke="#555" stroke-width="1"/><rect x="634" y="161.3" width="17" height="10.5" stroke="#2b8ad8" stroke-width="1.1" fill="#fff"/><path d="M636.5 166.5 H648.5 M639 164 L636.5 166.5 L639 169 M646 164 L648.5 166.5 L646 169" stroke="#2b8ad8" stroke-width="1.1" fill="none"/><path d="M662 166 L665.5 169.6 L669 166" stroke="#424242" stroke-width="1.2" fill="none"/><path d="M673.5 214 V205.5 H682" stroke="#555" stroke-width="1" fill="none"/><path d="M676 208 L683 215 M683 210.5 V215 H678.5" stroke="#555" stroke-width="1" fill="none"/><path d="M867 126.5 L870.5 130.1 L874 126.5" stroke="#424242" stroke-width="1.2" fill="none"/><rect x="703.5" y="161.3" width="19" height="11.5" stroke="#444" stroke-width="1.3" fill="#fff"/><path d="M710.5 164 Q706.8 164 706.8 167.2 Q706.8 170.3 710.5 170.3 M715.5 164 Q711.8 164 711.8 167.2" stroke="#555" stroke-width="1.1" fill="none"/><path d="M713.6 168.3 V175.2 Q718.3 178.3 723 175.2 V168.3" stroke="#e07a10" stroke-width="1.3" fill="#fff"/><ellipse cx="718.3" cy="168.3" rx="4.7" ry="2.1" fill="#fff" stroke="#e07a10" stroke-width="1.3"/><path d="M713.6 171.8 Q718.3 174.6 723 171.8" stroke="#e07a10" stroke-width="1.2" fill="none"/><path d="M733 166 L736.5 169.6 L740 166" stroke="#424242" stroke-width="1.2" fill="none"/><circle cx="759" cy="162.2" r="3.3" stroke="#3a3a3a" stroke-width="1.2" fill="none"/><circle cx="769.3" cy="171.8" r="3.3" stroke="#3a3a3a" stroke-width="1.2" fill="none"/><path d="M758.2 175.6 L769.7 158.2" stroke="#3a3a3a" stroke-width="1.2"/><text x="785.5" y="171" font-family="Liberation Sans" font-size="12.5" fill="#666" letter-spacing="-0.6" transform="translate(785.5 171) scale(0.92 1) translate(-785.5 -171)">000</text><path d="M813.5 152 V182" stroke="#d6d6d6" stroke-width="1"/><path d="M832 165 H822 M825.5 161.5 L822 165 L825.5 168.5" stroke="#2b8ad8" stroke-width="1.3" fill="none"/><text x="829.5" y="166" font-family="Liberation Sans" font-size="12" fill="#444" letter-spacing="-0.8">,0</text><text x="824" y="176" font-family="Liberation Sans" font-size="12" fill="#444" letter-spacing="-0.8">,00</text><text x="856" y="166" font-family="Liberation Sans" font-size="12" fill="#444" letter-spacing="-0.8">,00</text><path d="M853 171 H863 M859.5 167.5 L863 171 L859.5 174.5" stroke="#2b8ad8" stroke-width="1.3" fill="none"/><text x="862" y="176" font-family="Liberation Sans" font-size="12" fill="#444" letter-spacing="-0.8">,0</text><path d="M873.5 214 V205.5 H882" stroke="#555" stroke-width="1" fill="none"/><path d="M876 208 L883 215 M883 210.5 V215 H878.5" stroke="#555" stroke-width="1" fill="none"/><rect x="950.6" y="112.3" width="34.89999999999998" height="26.89999999999999" fill="#fafafa" stroke="#5a5a5a" stroke-width="1.3"/><path d="M957 112.3 V139.2" stroke="#5a5a5a" stroke-width="1.3"/><path d="M972.6 112.3 V139.2" stroke="#5a5a5a" stroke-width="1.3"/><path d="M978.8 112.3 V139.2" stroke="#5a5a5a" stroke-width="1.3"/><path d="M950.6 121.6 H985.5" stroke="#5a5a5a" stroke-width="1.3"/><path d="M950.6 130.3 H985.5" stroke="#5a5a5a" stroke-width="1.3"/><rect x="957" y="112.3" width="15.6" height="9.3" fill="#f4a3ab" stroke="#d92b2b" stroke-width="1.2"/><rect x="957" y="121.6" width="10.5" height="8.7" fill="#8fbfe8" stroke="#1f6fc0" stroke-width="1.2"/><rect x="957" y="130.3" width="18" height="8.9" fill="#f4a3ab" stroke="#d92b2b" stroke-width="1.2"/><rect x="1081.6" y="112.3" width="34.80000000000018" height="26.89999999999999" fill="#fafafa" stroke="#5a5a5a" stroke-width="1.3"/><path d="M1093.4 112.3 V139.2" stroke="#5a5a5a" stroke-width="1.3"/><path d="M1104.6 112.3 V139.2" stroke="#5a5a5a" stroke-width="1.3"/><path d="M1081.6 121.6 H1116.4" stroke="#5a5a5a" stroke-width="1.3"/><path d="M1081.6 130.3 H1116.4" stroke="#5a5a5a" stroke-width="1.3"/><rect x="1093.4" y="121.6" width="23" height="17.6" fill="#8fc0ec" stroke="#1f6fc0" stroke-width="1.3"/><path d="M1093.4 130.3 H1116.4 M1104.6 121.6 V139.2" stroke="#1f6fc0" stroke-width="1.1"/><path d="M1119 121.5 L1103 138.5 L1100.5 136.0 L1116.5 119.0 Q1119.5 118.5 1119 121.5 Z" fill="#fff" stroke="#333" stroke-width="1.2" stroke-linejoin="round"/><path d="M1102 135.0 Q1097 134.0 1095 139.5 Q1094 143.0 1090 144.0 Q1099 147.5 1103.5 140.0 Z" fill="#8fc0ec" stroke="#1f6fc0" stroke-width="1.2" stroke-linejoin="round"/><rect x="1170.8" y="112.3" width="34.700000000000045" height="26.89999999999999" fill="#fafafa" stroke="#5a5a5a" stroke-width="1.3"/><path d="M1177 112.3 V139.2" stroke="#5a5a5a" stroke-width="1.3"/><path d="M1170.8 118.4 H1205.5" stroke="#5a5a5a" stroke-width="1.3"/><path d="M1170.8 133.8 H1205.5" stroke="#5a5a5a" stroke-width="1.3"/><rect x="1177" y="118.4" width="22" height="15.4" fill="#8fc0ec" stroke="#1f6fc0" stroke-width="1.3"/><path d="M1208 121.5 L1192 138.5 L1189.5 136.0 L1205.5 119.0 Q1208.5 118.5 1208 121.5 Z" fill="#fff" stroke="#333" stroke-width="1.2" stroke-linejoin="round"/><path d="M1191 135.0 Q1186 134.0 1184 139.5 Q1183 143.0 1179 144.0 Q1188 147.5 1192.5 140.0 Z" fill="#8fc0ec" stroke="#1f6fc0" stroke-width="1.2" stroke-linejoin="round"/><path d="M1030 177 L1032.5 180 L1035 177" stroke="#424242" stroke-width="1.2" fill="none"/><path d="M1138 177 L1140.5 180 L1143 177" stroke="#424242" stroke-width="1.2" fill="none"/><path d="M1206 177 L1208.5 180 L1211 177" stroke="#424242" stroke-width="1.2" fill="none"/><rect x="1242.5" y="108.5" width="19.200000000000045" height="16.900000000000006" fill="#fff" stroke="#555" stroke-width="1.2"/><path d="M1248.9 108.5 V125.4" stroke="#555" stroke-width="1.2"/><path d="M1255.4 108.5 V125.4" stroke="#555" stroke-width="1.2"/><path d="M1242.5 113.3 H1261.7" stroke="#555" stroke-width="1.2"/><path d="M1242.5 120.5 H1261.7" stroke="#555" stroke-width="1.2"/><rect x="1249" y="113.3" width="12.7" height="7.2" fill="#8fc0ec" stroke="#1f6fc0" stroke-width="1.2"/><rect x="1242" y="112.6" width="7" height="8.6" fill="#fff"/><path d="M1252 116.9 H1243.5 M1246.8 113.6 L1243.5 116.9 L1246.8 120.2" stroke="#2b8ad8" stroke-width="1.3" fill="none"/><path d="M1345 116 L1348.0 119.2 L1351 116" stroke="#424242" stroke-width="1.2" fill="none"/><rect x="1242.5" y="140.6" width="19.200000000000045" height="17.0" fill="#fff" stroke="#555" stroke-width="1.2"/><path d="M1248.9 140.6 V157.6" stroke="#555" stroke-width="1.2"/><path d="M1255.4 140.6 V157.6" stroke="#555" stroke-width="1.2"/><path d="M1242.5 145 H1261.7" stroke="#555" stroke-width="1.2"/><path d="M1242.5 153 H1261.7" stroke="#555" stroke-width="1.2"/><rect x="1246" y="145" width="7" height="8" fill="#8fc0ec" stroke="#1f6fc0" stroke-width="1.4"/><rect x="1254.5" y="144" width="8" height="10" fill="#fff"/><path d="M1255.5 145.5 L1261 152.5 M1261 145.5 L1255.5 152.5" stroke="#e83a3a" stroke-width="1.3"/><path d="M1339 148 L1342.0 151.2 L1345 148" stroke="#424242" stroke-width="1.2" fill="none"/><rect x="1242.5" y="174" width="19.200000000000045" height="16.30000000000001" fill="#fff" stroke="#555" stroke-width="1.2"/><path d="M1248.9 174 V190.3" stroke="#555" stroke-width="1.2"/><path d="M1255.4 174 V190.3" stroke="#555" stroke-width="1.2"/><path d="M1242.5 178.5 H1261.7" stroke="#555" stroke-width="1.2"/><path d="M1242.5 186 H1261.7" stroke="#555" stroke-width="1.2"/><rect x="1247" y="178.3" width="10.5" height="7.8" fill="#8fc0ec" stroke="#1f6fc0" stroke-width="1.3"/><path d="M1246 172 H1258.5 M1246 170.3 V173.7 M1258.5 170.3 V173.7" stroke="#2b8ad8" stroke-width="1.2"/><path d="M1327 180 L1330.0 183.2 L1333 180" stroke="#424242" stroke-width="1.2" fill="none"/><path d="M1401.3 109 H1387 L1394.5 117 L1387 125 H1401.3" stroke="#3a3a3a" stroke-width="1.4" fill="none"/><path d="M1414 116 L1417.25 119.4 L1420.5 116" stroke="#424242" stroke-width="1.2" fill="none"/><rect x="1384.6" y="141" width="18.8" height="16" fill="#fafafa" stroke="#444" stroke-width="1.3"/><path d="M1384.6 142.6 H1403.4" stroke="#444" stroke-width="1.5"/><path d="M1393.5 146.5 V154 M1390.5 151 L1393.5 154 L1396.5 151" stroke="#2b8ad8" stroke-width="1.2" fill="none"/><path d="M1412 148.5 L1415.25 151.9 L1418.5 148.5" stroke="#424242" stroke-width="1.2" fill="none"/><path d="M1385 182.5 L1396 171.6 L1403 178.6 L1392 189.5 Z" fill="#fff" stroke="#a83ab8" stroke-width="1.3" stroke-linejoin="round"/><path d="M1385 182.5 L1389.5 178 L1396.5 185 L1392 189.5 Z" fill="#d9a3e3" stroke="#a83ab8" stroke-width="1.3" stroke-linejoin="round"/><path d="M1412 180 L1415.25 183.4 L1418.5 180" stroke="#424242" stroke-width="1.2" fill="none"/><path d="M1457.5 124.5 L1463.5 110 L1469.5 124.5 M1459.5 120 H1467.5" stroke="#2b8ad8" stroke-width="1.4" fill="none"/><text x="1458" y="141.5" font-family="Liberation Sans" font-size="19" fill="#444" transform="translate(1458 141.5) scale(0.85 1) translate(-1458 -141.5)">Я</text><path d="M1473.6 117.5 H1492.3 V120 L1485.5 127.5 V136 H1480.5 V127.5 L1473.6 120 Z" fill="#fff" stroke="#444" stroke-width="1.3" stroke-linejoin="round"/><path d="M1505 177 L1507.5 180 L1510 177" stroke="#424242" stroke-width="1.2" fill="none"/><circle cx="1567.2" cy="121.6" r="12.6" fill="#fafafa" stroke="#3a3a3a" stroke-width="1.3"/><path d="M1558.5 130.5 L1544.8 144.3" stroke="#3a3a3a" stroke-width="1.4"/><path d="M1594 177 L1596.5 180 L1599 177" stroke="#424242" stroke-width="1.2" fill="none"/><rect x="1653.2" y="109.1" width="33.6" height="33.6" fill="none" stroke="#e05a2b" stroke-width="1.7"/><rect x="1656.9" y="112.8" width="11.4" height="11.4" rx="0.8" fill="none" stroke="#e05a2b" stroke-width="1.7"/><rect x="1671.8" y="112.8" width="11.4" height="11.4" rx="0.8" fill="none" stroke="#e05a2b" stroke-width="1.7"/><rect x="1656.9" y="127.8" width="11.4" height="11.4" rx="0.8" fill="none" stroke="#e05a2b" stroke-width="1.7"/><rect x="1671.8" y="127.8" width="11.4" height="11.4" rx="0.8" fill="none" stroke="#e05a2b" stroke-width="1.7"/><path d="M1882 212 L1888 206 L1894 212" stroke="#444" stroke-width="1.3" fill="none"/><path d="M117.5 246 L123.25 252 L129.0 246" stroke="#333" stroke-width="1.3" fill="none"/><rect x="148.3" y="240.6" width="2.6" height="2.6" fill="#333"/><rect x="148.3" y="245.6" width="2.6" height="2.6" fill="#333"/><rect x="148.3" y="250.6" width="2.6" height="2.6" fill="#333"/><path d="M170.5 239.5 L185.5 254.5 M185.5 239.5 L170.5 254.5" stroke="#a6a6a6" stroke-width="1.2"/><path d="M198 247 L203.5 252.8 L218 240" stroke="#a6a6a6" stroke-width="1.2" fill="none"/><path d="M242 239.5 Q241 236.9 238.6 237.6 Q236.2 238.5 235.5 243 L233.6 253.5 Q232.8 256.9 229.6 256.3" stroke="#222" stroke-width="1.6" fill="none" stroke-linecap="round"/><path d="M233.8 242.4 H239.8" stroke="#222" stroke-width="1.3"/><path d="M239.6 246.2 Q241.6 245.2 242.1 247.6 L243.4 252.3 Q244.3 254.4 246.6 253" stroke="#222" stroke-width="1.5" fill="none" stroke-linecap="round"/><path d="M246.8 246 Q245.3 245.1 243.6 247.2 L240.6 252.2 Q239.5 254.1 237.9 253.4" stroke="#222" stroke-width="1.5" fill="none" stroke-linecap="round"/><path d="M253.5 244.5 L259.0 250.0 L264.5 244.5" stroke="#777" stroke-width="1.1" fill="none"/><path d="M1891.5 248 L1898 241.8 L1904.5 248" stroke="#444" stroke-width="1.2" fill="none"/><rect x="1897" y="294" width="21" height="671" rx="10" fill="#f5f5f5"/><path d="M1902.3 308.4 L1907.5 300.4 L1912.8 308.4 Z" fill="#707070" stroke="#707070" stroke-width="1" stroke-linejoin="round"/><rect x="1902.3" y="315" width="10.5" height="453" rx="5.25" fill="#707070"/><path d="M1902.3 951.5 L1907.5 959.5 L1912.8 951.5 Z" fill="#707070" stroke="#707070" stroke-width="1" stroke-linejoin="round"/><rect x="1176" y="972.5" width="721" height="20.3" rx="10" fill="#f5f5f5"/><path d="M1190.6 977.8 L1182.6 982.7 L1190.6 987.6 Z" fill="#707070" stroke="#707070" stroke-width="1" stroke-linejoin="round"/><rect x="1197" y="977.2" width="652" height="10.7" rx="5.35" fill="#707070"/><path d="M1882 977.6 L1891.4 982.7 L1882 987.8 Z" fill="#707070" stroke="#707070" stroke-width="1" stroke-linejoin="round"/><path d="M39.5 976.8 L32.5 982.5 L39.5 988.2" stroke="#a8a8a8" stroke-width="1.2" fill="none"/><path d="M72.8 976.8 L79.8 982.5 L72.8 988.2" stroke="#444" stroke-width="1.2" fill="none"/><circle cx="1069.8" cy="981.9" r="1.7" fill="#333"/><circle cx="1075.2" cy="981.9" r="1.7" fill="#333"/><circle cx="1080.6" cy="981.9" r="1.7" fill="#333"/><path d="M1108.3 982 H1122 M1115.2 975.3 V988.7" stroke="#333" stroke-width="1.3"/><rect x="1154.8" y="976.1999999999999" width="2.4" height="2.4" fill="#333"/><rect x="1154.8" y="981.5" width="2.4" height="2.4" fill="#333"/><rect x="1154.8" y="986.9" width="2.4" height="2.4" fill="#333"/><rect x="1560.3" y="1008.5" width="16" height="15.5" fill="none" stroke="#444" stroke-width="1.3"/><path d="M1565.6 1008.5 V1024 M1571 1008.5 V1024 M1560.3 1013.7 H1576.3 M1560.3 1018.9 H1576.3" stroke="#444" stroke-width="1.3"/><rect x="1610.2" y="1008.5" width="17.3" height="15.5" fill="none" stroke="#444" stroke-width="1.3"/><rect x="1614" y="1011.5" width="9.5" height="9.5" fill="none" stroke="#444" stroke-width="1.1"/><path d="M1616 1014.5 H1621.5 M1616 1016.5 H1621.5 M1616 1018.5 H1621.5" stroke="#444" stroke-width="0.9"/><path d="M1660.3 1008.5 H1677.5 V1024 H1660.3 Z M1663.5 1008.5 V1016 H1673 V1008.5 M1668.3 1008.5 V1016" fill="none" stroke="#444" stroke-width="1.3"/><path d="M1701 1017.5 H1710.3" stroke="#444" stroke-width="1.2"/><path d="M1717 1017.5 H1842" stroke="#666" stroke-width="1"/><rect x="1777" y="1010" width="6.2" height="13.4" rx="1" fill="#666"/><path d="M1848 1017.3 H1857.8 M1852.9 1012.4 V1022.2" stroke="#444" stroke-width="1.2"/><circle cx="170.6" cy="1011" r="2.2" fill="none" stroke="#222" stroke-width="1.3"/><path d="M168.3 1012.5 Q165 1010.5 163.6 1012.3 Q163 1014.3 166.5 1014.6 Q167.9 1015 167.7 1017.2 L166.3 1023.8 Q166 1025.8 167.7 1025.8 Q169 1025.8 169.5 1023.5 L170.5 1019.8 L171.6 1022" stroke="#222" stroke-width="1.3" fill="none" stroke-linejoin="round"/><path d="M172.9 1012.5 Q176.3 1010.5 177.7 1012.3 Q178.3 1014.3 175 1014.8 L173.6 1015.9" stroke="#222" stroke-width="1.3" fill="none"/><path d="M172.2 1017.3 L180.5 1025.5 M180.5 1017.3 L172.2 1025.5" stroke="#222" stroke-width="1.2"/></svg><div style="position:absolute;left:1419.87px;top:903.00px;white-space:pre;line-height:27px;font-family:&quot;Liberation Sans&quot;,sans-serif;font-size:24px;font-weight:400;color:rgba(150,150,150,0.62);transform:scaleX(1.0496);transform-origin:0 0;">Активация Windows</div><div style="position:absolute;left:1420.20px;top:937.00px;white-space:pre;line-height:19px;font-family:&quot;Liberation Sans&quot;,sans-serif;font-size:17px;font-weight:400;color:rgba(150,150,150,0.62);transform:scaleX(1.0451);transform-origin:0 0;">Чтобы активировать Windows, перейдите в раздел</div><div style="position:absolute;left:1420.20px;top:962.00px;white-space:pre;line-height:19px;font-family:&quot;Liberation Sans&quot;,sans-serif;font-size:17px;font-weight:400;color:rgba(150,150,150,0.62);transform:scaleX(1.0476);transform-origin:0 0;">&quot;Параметры&quot;.</div></body></html>
